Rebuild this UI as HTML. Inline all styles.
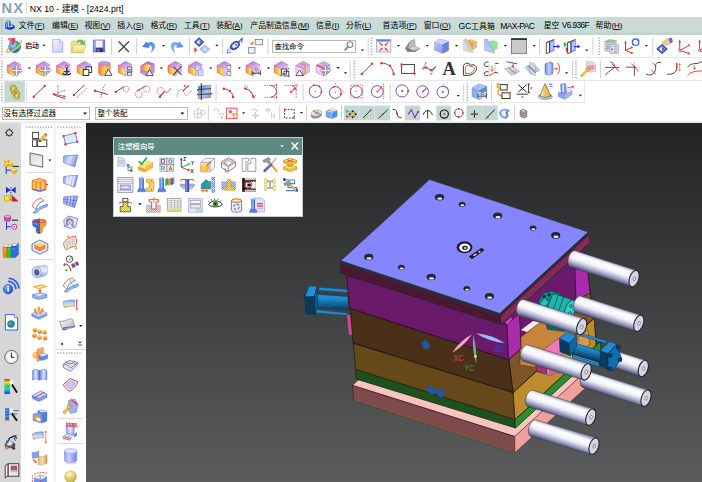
<!DOCTYPE html><html><head><meta charset="utf-8"><title>NX 10</title><style>
html,body{margin:0;padding:0;}
body{width:702px;height:482px;overflow:hidden;background:#fff;position:relative;font-family:"Liberation Sans","Noto Sans CJK SC",sans-serif;font-size:8px;color:#111;}
.abs{position:absolute;}
.t{position:absolute;white-space:nowrap;line-height:10px;height:10px;}
#title{left:0;top:0;width:702px;height:17px;background:#fff;}
#menu{left:0;top:17px;width:702px;height:18px;background:linear-gradient(#cbdbd8 0%,#c9d9d6 75%,#bfd0cc 100%);}
#tb{left:0;top:35px;width:702px;height:88px;background:#fff;}
.hs{position:absolute;left:0;width:702px;height:1px;background:#e6e6e6;}
#res{left:0;top:123px;width:21px;height:359px;background:#d6d6d6;}
#side{left:21px;top:123px;width:65px;height:359px;background:#fff;}
#view{left:86px;top:123px;width:616px;height:359px;background:linear-gradient(#222324 0%,#3f4042 50%,#5a5c5e 100%);}
.combo{position:absolute;height:12px;border:1px solid #b9b9b9;background:#fff;box-sizing:border-box;}
#dlg{left:113px;top:137px;width:190px;height:80px;background:#fff;border:1px solid #c8c8c8;box-sizing:border-box;}
#dlgt{left:0;top:0;width:188px;height:17px;background:#5c8b83;}
svg{position:absolute;left:0;top:0;}
</style></head><body>
<div id="title" class="abs"></div>
<div id="menu" class="abs"></div>
<div id="tb" class="abs"></div>
<div class="hs" style="top:57px;width:702px"></div>
<div class="hs" style="top:80px;width:702px"></div>
<div class="hs" style="top:102px;width:585px"></div>
<div class="abs" style="left:584px;top:80px;width:1px;height:22px;background:#e6e6e6"></div>
<div class="hs" style="top:121px;height:2px;background:#ececec"></div>
<div id="res" class="abs"></div><div id="side" class="abs"></div><div id="view" class="abs"></div>
<div class="t" style="left:1.6px;top:0.2px;font-size:14.6px;line-height:16px;height:16px;color:#8e9eac;letter-spacing:1.2px;font-weight:bold;">NX</div>
<div class="abs" style="left:26px;top:1px;width:1px;height:13px;background:#ddd"></div>
<div class="t" style="left:29.8px;top:3.8px;font-size:8.7px;color:#000;">NX 10 - 建模 - [2424.prt]</div>
<div class="t" style="left:18.8px;top:20.5px;font-size:7.9px;color:#000;">文件(<u>F</u>)</div>
<div class="t" style="left:52.0px;top:20.5px;font-size:7.9px;color:#000;">编辑(<u>E</u>)</div>
<div class="t" style="left:84.4px;top:20.5px;font-size:7.9px;color:#000;">视图(<u>V</u>)</div>
<div class="t" style="left:117.3px;top:20.5px;font-size:7.9px;color:#000;">插入(<u>S</u>)</div>
<div class="t" style="left:150.4px;top:20.5px;font-size:7.9px;color:#000;">格式(<u>R</u>)</div>
<div class="t" style="left:183.9px;top:20.5px;font-size:7.9px;color:#000;">工具(<u>T</u>)</div>
<div class="t" style="left:216.2px;top:20.5px;font-size:7.9px;color:#000;">装配(<u>A</u>)</div>
<div class="t" style="left:250.3px;top:20.5px;font-size:7.9px;color:#000;">产品制造信息(<u>M</u>)</div>
<div class="t" style="left:316.0px;top:20.5px;font-size:7.9px;color:#000;">信息(<u>I</u>)</div>
<div class="t" style="left:346.0px;top:20.5px;font-size:7.9px;color:#000;">分析(<u>L</u>)</div>
<div class="t" style="left:382.6px;top:20.5px;font-size:7.9px;color:#000;">首选项(<u>P</u>)</div>
<div class="t" style="left:423.7px;top:20.5px;font-size:7.9px;color:#000;">窗口(<u>O</u>)</div>
<div class="t" style="left:458.6px;top:20.5px;font-size:7.9px;color:#000;"><span style="font-size:8.6px;letter-spacing:-0.2px">GC</span>工具箱</div>
<div class="t" style="left:500.2px;top:20.5px;font-size:7.9px;color:#000;"><span style="font-size:8.5px;letter-spacing:-0.55px">MAX-PAC</span></div>
<div class="t" style="left:543.7px;top:20.5px;font-size:7.9px;color:#000;">星空 <span style="font-size:8.2px;letter-spacing:-0.5px">V6.936F</span></div>
<div class="t" style="left:595.6px;top:20.5px;font-size:7.9px;color:#000;">帮助(<u>H</u>)</div>
<div class="t" style="left:25.2px;top:40.5px;font-size:6.9px;font-weight:500;color:#000;">启动</div>
<div class="combo" style="left:272px;top:40px;width:84px;height:13px;"></div>
<div class="t" style="left:274.5px;top:41.5px;font-size:7.3px;color:#000;">查找命令</div>
<div class="combo" style="left:2px;top:107px;width:88px;height:13px;"></div>
<div class="t" style="left:3.6px;top:108.5px;font-size:7.5px;color:#000;">没有选择过滤器</div>
<div class="combo" style="left:95px;top:107px;width:93px;height:13px;"></div>
<div class="t" style="left:97.5px;top:108.5px;font-size:7.5px;color:#000;">整个装配</div>
<div id="dlg" class="abs"><div id="dlgt" class="abs"></div><div class="t" style="left:3.8px;top:3.8px;font-size:7.4px;font-weight:500;color:#fff;">注塑模向导</div></div>
<svg width="702" height="482" viewBox="0 0 702 482">
<g id="model">
<linearGradient id="lact" x1="0" y1="0" x2="0" y2="1"><stop offset="0" stop-color="#2297e0"/><stop offset="0.35" stop-color="#1a84c8"/><stop offset="1" stop-color="#093a5a"/></linearGradient>
<polygon points="319.0,287.2 348.0,289.6 348.0,292.6 319.0,290.4" fill="#1c8cd4" stroke="#0b3c5e" stroke-width="0.4" stroke-linejoin="round"/>
<polygon points="315.5,294.3 348.0,296.7 348.0,309.8 315.5,307.9" fill="url(#lact)" stroke="#0b3c5e" stroke-width="0.4" stroke-linejoin="round"/>
<polygon points="315.7,309.6 348.0,313.2 348.0,315.4 315.7,313.0" fill="#1c8cd4" stroke="#0b3c5e" stroke-width="0.4" stroke-linejoin="round"/>
<polygon points="309.2,285.9 317.1,286.4 314.3,296.7 305.0,297.1" fill="#1f92dc" stroke="#0b3c5e" stroke-width="0.5" stroke-linejoin="round"/>
<polygon points="305.0,297.1 314.3,296.7 315.3,314.4 306.4,313.9" fill="#0a3a5c" stroke="#072a42" stroke-width="0.5" stroke-linejoin="round"/>
<polygon points="314.3,296.7 317.1,286.4 318.0,302.0 315.3,314.4" fill="#0f5a8c" stroke="#072a42" stroke-width="0.4" stroke-linejoin="round"/>
<polygon points="303.3,294.0 305.0,294.0 305.0,298.5 303.3,298.5" fill="#0b3c5e"/>
<polygon points="304.5,308.0 306.0,308.0 306.0,312.0 304.5,312.0" fill="#0b3c5e"/>
<polygon points="307.0,286.5 308.8,286.0 308.4,289.0 306.8,289.4" fill="#0f5a8c"/>
<polygon points="352.5,385.4 514.8,436.5 588.5,368.9 426.2,317.8" fill="#f9c4c0" stroke="#5a3a3a" stroke-width="0.5" stroke-linejoin="round"/>
<polygon points="352.5,385.4 514.8,436.5 514.9,452.7 353.5,399.8" fill="#7e4a4c" stroke="#3a2628" stroke-width="0.85" stroke-linejoin="round"/>
<polygon points="514.8,436.5 588.5,368.9 588.6,385.1 514.9,452.7" fill="#f0a09a" stroke="#5a3a3a" stroke-width="0.6" stroke-linejoin="round"/>
<path d="M353.5 399.5 L514.9 452.4" stroke="#8a7a30" stroke-width="0.7"/>
<polygon points="355.5,369.3 515.0,419.8 515.5,428.0 356.0,379.0" fill="#1d5220" stroke="#10300f" stroke-width="0.8" stroke-linejoin="round"/>
<polygon points="515.0,419.8 600.5,341.4 601.0,349.6 515.5,428.0" fill="#2a8f30" stroke="#10300f" stroke-width="0.8" stroke-linejoin="round"/>
<polygon points="353.4,343.3 513.2,392.5 514.9,419.6 355.4,369.3" fill="#66491b" stroke="#2a1e0c" stroke-width="0.85" stroke-linejoin="round"/>
<polygon points="513.2,392.5 594.3,318.1 596.0,345.2 514.9,419.6" fill="#bd8c2e" stroke="#2a1e0c" stroke-width="0.85" stroke-linejoin="round"/>
<polygon points="350.0,308.3 509.0,359.8 513.2,392.5 353.2,343.0" fill="#4b3019" stroke="#20140a" stroke-width="0.85" stroke-linejoin="round"/>
<polygon points="509.0,359.8 589.3,286.1 593.5,318.8 513.2,392.5" fill="#7c5529" stroke="#20140a" stroke-width="0.85" stroke-linejoin="round"/>
<polygon points="346.6,314.3 350.4,314.8 352.3,335.2 348.6,335.2" fill="#c0509a" stroke="#50203c" stroke-width="0.4" stroke-linejoin="round"/>
<polygon points="502.0,325.0 575.7,257.4 582.3,292.2 508.6,359.8" fill="#6d1a6e"/>
<polygon points="520.0,338.0 545.0,318.0 575.0,326.0 575.0,340.0 540.0,368.0 520.0,365.0" fill="#c8853a" stroke="#4a2e10" stroke-width="0.5" stroke-linejoin="round"/>
<polygon points="540.0,368.0 575.0,340.0 588.0,330.0 590.0,344.0 556.0,372.0" fill="#d69a48" stroke="#4a2e10" stroke-width="0.5" stroke-linejoin="round"/>
<polygon points="540.0,352.0 562.0,336.0 580.0,340.0 560.0,356.0 560.0,372.0 548.0,376.0" fill="#f07ab8" stroke="#7a2a5a" stroke-width="0.5" stroke-linejoin="round"/>
<polygon points="549.0,356.0 560.0,356.0 560.0,372.0 549.0,375.0" fill="#d0609a"/>
<polygon points="535.5,364.5 546.5,367.2 546.5,374.2 537.0,372.0" fill="#a03468" stroke="#401028" stroke-width="0.5" stroke-linejoin="round"/>
<circle cx="544.5" cy="373.6" r="1" fill="#2a6ae0"/>
<g transform="translate(2.5 5.5)">
<polygon points="536.0,296.0 541.0,287.5 549.0,285.5 557.0,288.0 560.0,293.0 552.0,301.0 540.0,303.0" fill="#0d8a84" stroke="#063c3a" stroke-width="0.6" stroke-linejoin="round"/>
<circle cx="541.5" cy="291.0" r="1.5" fill="#052a28"/>
<circle cx="546.5" cy="289.2" r="1.5" fill="#052a28"/>
<circle cx="551.5" cy="290.2" r="1.5" fill="#052a28"/>
<circle cx="544.0" cy="295.0" r="1.5" fill="#052a28"/>
<circle cx="549.0" cy="294.0" r="1.5" fill="#052a28"/>
<polygon points="538.0,298.0 543.0,293.0 546.0,297.0 541.0,301.0" fill="#27c4ba"/>
<g transform="rotate(19 560 302)"><rect x="546" y="291.5" width="22" height="21" rx="3" fill="#1cb4ac" stroke="#063c3a" stroke-width="0.6"/><path d="M552 291.5 V312.5 M557.5 291.5 V312.5" stroke="#0a5a56" stroke-width="0.8"/><ellipse cx="568" cy="302" rx="5" ry="10.5" fill="#2fd0c6" stroke="#063c3a" stroke-width="0.7"/><circle cx="567.5" cy="298" r="1.4" fill="none" stroke="#063c3a" stroke-width="0.7"/><circle cx="569" cy="305" r="1.4" fill="none" stroke="#063c3a" stroke-width="0.7"/></g>
<polygon points="541.0,310.0 562.0,318.0 562.0,326.0 545.0,324.0" fill="#0c6662" stroke="#063c3a" stroke-width="0.5" stroke-linejoin="round"/>
</g>
<polygon points="521.0,330.0 533.0,321.0 540.0,322.0 527.0,332.0" fill="#f2f2f2"/>
<polygon points="346.7,275.3 507.0,324.5 508.6,359.8 509.0,359.8 350.0,308.3 349.5,308.0" fill="#691a6b" stroke="#2a0c2a" stroke-width="0.85" stroke-linejoin="round"/>
<polygon points="507.0,324.5 519.5,313.0 521.1,348.3 508.6,359.8" fill="#ab2bad" stroke="#3a0f3a" stroke-width="0.85" stroke-linejoin="round"/>
<polygon points="574.6,262.5 585.6,252.2 590.2,293.0 576.0,300.0" fill="#aa2bac" stroke="#3a0f3a" stroke-width="0.85" stroke-linejoin="round"/>
<polygon points="340.8,260.8 499.8,313.5 501.0,324.5 340.2,272.8" fill="#4a1833" stroke="#26262c" stroke-width="0.8" stroke-linejoin="round"/>
<polygon points="499.8,313.5 588.4,232.0 590.6,242.2 501.0,324.5" fill="#86285a" stroke="#26262c" stroke-width="0.8" stroke-linejoin="round"/>
<polygon points="340.8,260.8 429.5,179.5 588.4,232.0 499.8,313.5" fill="#8585ff" stroke="#34343e" stroke-width="0.7" stroke-linejoin="round"/>
<path d="M340.6 262.5 L499.8 315.2 L588.8 233.5" stroke="#2c2c38" stroke-width="2.8" fill="none" stroke-linejoin="round"/>
<polygon points="505.5,322.5 511.0,317.5 512.0,319.5 507.0,324.5" fill="#e040e0"/>
<ellipse cx="439.5" cy="197.2" rx="4.6" ry="3.3" fill="#26262e"/><ellipse cx="439.8" cy="198.6" rx="2.6" ry="1.2" fill="#ececec"/>
<ellipse cx="497.7" cy="215.8" rx="4.6" ry="3.3" fill="#26262e"/><ellipse cx="498.0" cy="217.2" rx="2.6" ry="1.2" fill="#ececec"/>
<ellipse cx="555.7" cy="235.4" rx="4.6" ry="3.3" fill="#26262e"/><ellipse cx="556.0" cy="236.8" rx="2.6" ry="1.2" fill="#ececec"/>
<ellipse cx="368.8" cy="257.0" rx="4.6" ry="3.3" fill="#26262e"/><ellipse cx="369.1" cy="258.4" rx="2.6" ry="1.2" fill="#ececec"/>
<ellipse cx="431.2" cy="277.0" rx="4.6" ry="3.3" fill="#26262e"/><ellipse cx="431.5" cy="278.4" rx="2.6" ry="1.2" fill="#ececec"/>
<ellipse cx="489.4" cy="296.2" rx="4.6" ry="3.3" fill="#26262e"/><ellipse cx="489.7" cy="297.6" rx="2.6" ry="1.2" fill="#ececec"/>
<ellipse cx="462.1" cy="204.2" rx="3.4" ry="2.5" fill="#26262e"/><ellipse cx="462.4" cy="205.2" rx="1.9" ry="0.9" fill="#ececec"/>
<ellipse cx="533.1" cy="228.1" rx="3.4" ry="2.5" fill="#26262e"/><ellipse cx="533.4" cy="229.2" rx="1.9" ry="0.9" fill="#ececec"/>
<ellipse cx="401.3" cy="267.3" rx="3.4" ry="2.5" fill="#26262e"/><ellipse cx="401.6" cy="268.4" rx="1.9" ry="0.9" fill="#ececec"/>
<ellipse cx="466.8" cy="288.6" rx="3.4" ry="2.5" fill="#26262e"/><ellipse cx="467.1" cy="289.7" rx="1.9" ry="0.9" fill="#ececec"/>
<ellipse cx="464.5" cy="247.3" rx="7.8" ry="6" fill="#1c1c22"/><ellipse cx="464.7" cy="247.6" rx="5.6" ry="4.2" fill="#f2f2f2"/><ellipse cx="465" cy="247.8" rx="2.8" ry="2.1" fill="#222"/><ellipse cx="465.2" cy="248" rx="1.2" ry="0.9" fill="#ddd"/>
<polygon points="468.8,256.6 481.6,247.8 484.4,250.3 471.8,259.2" fill="#1c1c22"/>
<polygon points="473.0,255.2 476.0,253.2 477.0,254.2 474.0,256.2" fill="#e8e8e8"/>
<polygon points="478.0,252.0 480.0,250.6 480.8,251.5 478.8,252.9" fill="#e8e8e8"/>
<linearGradient id="cg5" gradientUnits="userSpaceOnUse" x1="616.7" y1="351.1" x2="611.3" y2="367.3"><stop offset="0" stop-color="#a8a8c2"/><stop offset="0.08" stop-color="#e2e2f0"/><stop offset="0.2" stop-color="#ffffff"/><stop offset="0.48" stop-color="#f2f2fb"/><stop offset="0.68" stop-color="#babad6"/><stop offset="0.86" stop-color="#7c7ca4"/><stop offset="1" stop-color="#3e3e56"/></linearGradient><ellipse cx="614.0" cy="359.2" rx="4.6" ry="8.5" transform="rotate(18.4 614.0 359.2)" fill="url(#cg5)" stroke="#3a3a44" stroke-width="0.5"/><polygon points="616.7,351.1 646.0,360.4 640.6,376.6 611.3,367.3" fill="url(#cg5)"/><path d="M616.7 351.1 L646.0 360.4 M611.3 367.3 L640.6 376.6" stroke="#3a3a44" stroke-width="0.5" fill="none"/><ellipse cx="643.3" cy="368.5" rx="4.6" ry="8.5" transform="rotate(18.4 643.3 368.5)" fill="#d4d4e4" stroke="#24242c" stroke-width="1.1"/><ellipse cx="643.6" cy="368.5" rx="1.2" ry="2" transform="rotate(18.4 643.3 368.5)" fill="#f4f4fa" stroke="#555" stroke-width="0.6"/>
<linearGradient id="ract" gradientUnits="userSpaceOnUse" x1="586" y1="346" x2="583" y2="358"><stop offset="0" stop-color="#2297e0"/><stop offset="0.4" stop-color="#1679b8"/><stop offset="1" stop-color="#083450"/></linearGradient>
<polygon points="581.7,333.4 606.8,340.8 606.8,343.6 581.7,336.2" fill="#1f8dd6" stroke="#0a3350" stroke-width="0.4" stroke-linejoin="round"/>
<polygon points="572.0,342.0 602.0,351.5 600.0,364.5 572.0,356.0" fill="#0b3350"/>
<polygon points="572.0,342.1 602.2,351.8 600.0,361.5 572.5,353.5" fill="url(#ract)" stroke="#0a3350" stroke-width="0.4" stroke-linejoin="round"/>
<polygon points="573.0,354.8 599.0,362.8 599.0,364.0 573.0,356.0" fill="#8a93a6"/>
<polygon points="572.5,355.6 598.8,364.0 598.8,366.6 572.5,358.2" fill="#1f8dd6" stroke="#0a3350" stroke-width="0.4" stroke-linejoin="round"/>
<polygon points="559.4,338.7 566.8,331.8 576.5,335.8 569.1,343.3" fill="#1f8dd6" stroke="#0a3350" stroke-width="0.5" stroke-linejoin="round"/>
<polygon points="559.4,338.7 569.1,343.3 570.3,355.8 560.0,351.8" fill="#0a3c60" stroke="#072a42" stroke-width="0.5" stroke-linejoin="round"/>
<polygon points="569.1,343.3 576.5,335.8 577.0,346.0 570.3,355.8" fill="#1266a0" stroke="#072a42" stroke-width="0.5" stroke-linejoin="round"/>
<polygon points="600.0,350.7 609.6,341.6 617.0,343.8 608.0,353.5" fill="#1f8dd6" stroke="#0a3350" stroke-width="0.5" stroke-linejoin="round"/>
<polygon points="600.0,351.0 608.0,354.1 608.0,369.5 600.5,366.1" fill="#0a3c60" stroke="#072a42" stroke-width="0.5" stroke-linejoin="round"/>
<polygon points="608.0,354.1 616.5,344.4 621.6,358.1 613.1,370.7 608.0,369.5" fill="#116eae" stroke="#072a42" stroke-width="0.6" stroke-linejoin="round"/>
<circle cx="618.2" cy="347.3" r="2.3" fill="#0a2e48"/><circle cx="618.2" cy="347.3" r="1.1" fill="#0d4a74"/>
<circle cx="610.4" cy="355.6" r="2.3" fill="#0a2e48"/><circle cx="610.4" cy="355.6" r="1.1" fill="#0d4a74"/>
<circle cx="620.0" cy="359.8" r="2.3" fill="#0a2e48"/><circle cx="620.0" cy="359.8" r="1.1" fill="#0d4a74"/>
<circle cx="610.4" cy="368.6" r="2.3" fill="#0a2e48"/><circle cx="610.4" cy="368.6" r="1.1" fill="#0d4a74"/>
<linearGradient id="cg1" gradientUnits="userSpaceOnUse" x1="575.6" y1="250.8" x2="570.2" y2="267.0"><stop offset="0" stop-color="#a8a8c2"/><stop offset="0.08" stop-color="#e2e2f0"/><stop offset="0.2" stop-color="#ffffff"/><stop offset="0.48" stop-color="#f2f2fb"/><stop offset="0.68" stop-color="#babad6"/><stop offset="0.86" stop-color="#7c7ca4"/><stop offset="1" stop-color="#3e3e56"/></linearGradient><ellipse cx="572.9" cy="258.9" rx="4.6" ry="8.5" transform="rotate(18.4 572.9 258.9)" fill="url(#cg1)" stroke="#3a3a44" stroke-width="0.5"/><polygon points="575.6,250.8 636.8,270.5 631.4,286.7 570.2,267.0" fill="url(#cg1)"/><path d="M575.6 250.8 L636.8 270.5 M570.2 267.0 L631.4 286.7" stroke="#3a3a44" stroke-width="0.5" fill="none"/><ellipse cx="634.1" cy="278.6" rx="4.6" ry="8.5" transform="rotate(18.4 634.1 278.6)" fill="#d4d4e4" stroke="#24242c" stroke-width="1.1"/><ellipse cx="634.4" cy="278.6" rx="1.2" ry="2" transform="rotate(18.4 634.1 278.6)" fill="#f4f4fa" stroke="#555" stroke-width="0.6"/>
<linearGradient id="cg2" gradientUnits="userSpaceOnUse" x1="581.1" y1="296.1" x2="575.7" y2="312.3"><stop offset="0" stop-color="#a8a8c2"/><stop offset="0.08" stop-color="#e2e2f0"/><stop offset="0.2" stop-color="#ffffff"/><stop offset="0.48" stop-color="#f2f2fb"/><stop offset="0.68" stop-color="#babad6"/><stop offset="0.86" stop-color="#7c7ca4"/><stop offset="1" stop-color="#3e3e56"/></linearGradient><ellipse cx="578.4" cy="304.2" rx="4.6" ry="8.5" transform="rotate(18.4 578.4 304.2)" fill="url(#cg2)" stroke="#3a3a44" stroke-width="0.5"/><polygon points="581.1,296.1 641.5,315.2 636.1,331.4 575.7,312.3" fill="url(#cg2)"/><path d="M581.1 296.1 L641.5 315.2 M575.7 312.3 L636.1 331.4" stroke="#3a3a44" stroke-width="0.5" fill="none"/><ellipse cx="638.8" cy="323.3" rx="4.6" ry="8.5" transform="rotate(18.4 638.8 323.3)" fill="#d4d4e4" stroke="#24242c" stroke-width="1.1"/><ellipse cx="639.1" cy="323.3" rx="1.2" ry="2" transform="rotate(18.4 638.8 323.3)" fill="#f4f4fa" stroke="#555" stroke-width="0.6"/>
<linearGradient id="cg3" gradientUnits="userSpaceOnUse" x1="524.0" y1="299.5" x2="518.6" y2="315.7"><stop offset="0" stop-color="#a8a8c2"/><stop offset="0.08" stop-color="#e2e2f0"/><stop offset="0.2" stop-color="#ffffff"/><stop offset="0.48" stop-color="#f2f2fb"/><stop offset="0.68" stop-color="#babad6"/><stop offset="0.86" stop-color="#7c7ca4"/><stop offset="1" stop-color="#3e3e56"/></linearGradient><ellipse cx="521.3" cy="307.6" rx="4.6" ry="8.5" transform="rotate(18.4 521.3 307.6)" fill="url(#cg3)" stroke="#3a3a44" stroke-width="0.5"/><polygon points="524.0,299.5 584.4,318.6 579.0,334.8 518.6,315.7" fill="url(#cg3)"/><path d="M524.0 299.5 L584.4 318.6 M518.6 315.7 L579.0 334.8" stroke="#3a3a44" stroke-width="0.5" fill="none"/><ellipse cx="581.7" cy="326.7" rx="4.6" ry="8.5" transform="rotate(18.4 581.7 326.7)" fill="#d4d4e4" stroke="#24242c" stroke-width="1.1"/><ellipse cx="582.0" cy="326.7" rx="1.2" ry="2" transform="rotate(18.4 581.7 326.7)" fill="#f4f4fa" stroke="#555" stroke-width="0.6"/>
<linearGradient id="cg6" gradientUnits="userSpaceOnUse" x1="587.9" y1="371.0" x2="582.5" y2="387.2"><stop offset="0" stop-color="#a8a8c2"/><stop offset="0.08" stop-color="#e2e2f0"/><stop offset="0.2" stop-color="#ffffff"/><stop offset="0.48" stop-color="#f2f2fb"/><stop offset="0.68" stop-color="#babad6"/><stop offset="0.86" stop-color="#7c7ca4"/><stop offset="1" stop-color="#3e3e56"/></linearGradient><ellipse cx="585.2" cy="379.1" rx="4.6" ry="8.5" transform="rotate(18.4 585.2 379.1)" fill="url(#cg6)" stroke="#3a3a44" stroke-width="0.5"/><polygon points="587.9,371.0 648.7,390.1 643.3,406.3 582.5,387.2" fill="url(#cg6)"/><path d="M587.9 371.0 L648.7 390.1 M582.5 387.2 L643.3 406.3" stroke="#3a3a44" stroke-width="0.5" fill="none"/><ellipse cx="646.0" cy="398.2" rx="4.6" ry="8.5" transform="rotate(18.4 646.0 398.2)" fill="#d4d4e4" stroke="#24242c" stroke-width="1.1"/><ellipse cx="646.3" cy="398.2" rx="1.2" ry="2" transform="rotate(18.4 646.0 398.2)" fill="#f4f4fa" stroke="#555" stroke-width="0.6"/>
<linearGradient id="cg4" gradientUnits="userSpaceOnUse" x1="528.2" y1="344.9" x2="522.8" y2="361.1"><stop offset="0" stop-color="#a8a8c2"/><stop offset="0.08" stop-color="#e2e2f0"/><stop offset="0.2" stop-color="#ffffff"/><stop offset="0.48" stop-color="#f2f2fb"/><stop offset="0.68" stop-color="#babad6"/><stop offset="0.86" stop-color="#7c7ca4"/><stop offset="1" stop-color="#3e3e56"/></linearGradient><ellipse cx="525.5" cy="353.0" rx="4.6" ry="8.5" transform="rotate(18.4 525.5 353.0)" fill="url(#cg4)" stroke="#3a3a44" stroke-width="0.5"/><polygon points="528.2,344.9 588.9,363.8 583.5,380.0 522.8,361.1" fill="url(#cg4)"/><path d="M528.2 344.9 L588.9 363.8 M522.8 361.1 L583.5 380.0" stroke="#3a3a44" stroke-width="0.5" fill="none"/><ellipse cx="586.2" cy="371.9" rx="4.6" ry="8.5" transform="rotate(18.4 586.2 371.9)" fill="#d4d4e4" stroke="#24242c" stroke-width="1.1"/><ellipse cx="586.5" cy="371.9" rx="1.2" ry="2" transform="rotate(18.4 586.2 371.9)" fill="#f4f4fa" stroke="#555" stroke-width="0.6"/>
<linearGradient id="cg7" gradientUnits="userSpaceOnUse" x1="533.1" y1="390.3" x2="527.7" y2="406.5"><stop offset="0" stop-color="#a8a8c2"/><stop offset="0.08" stop-color="#e2e2f0"/><stop offset="0.2" stop-color="#ffffff"/><stop offset="0.48" stop-color="#f2f2fb"/><stop offset="0.68" stop-color="#babad6"/><stop offset="0.86" stop-color="#7c7ca4"/><stop offset="1" stop-color="#3e3e56"/></linearGradient><ellipse cx="530.4" cy="398.4" rx="4.6" ry="8.5" transform="rotate(18.4 530.4 398.4)" fill="url(#cg7)" stroke="#3a3a44" stroke-width="0.5"/><polygon points="533.1,390.3 593.5,409.1 588.1,425.3 527.7,406.5" fill="url(#cg7)"/><path d="M533.1 390.3 L593.5 409.1 M527.7 406.5 L588.1 425.3" stroke="#3a3a44" stroke-width="0.5" fill="none"/><ellipse cx="590.8" cy="417.2" rx="4.6" ry="8.5" transform="rotate(18.4 590.8 417.2)" fill="#d4d4e4" stroke="#24242c" stroke-width="1.1"/><ellipse cx="591.1" cy="417.2" rx="1.2" ry="2" transform="rotate(18.4 590.8 417.2)" fill="#f4f4fa" stroke="#555" stroke-width="0.6"/>
<linearGradient id="cg8" gradientUnits="userSpaceOnUse" x1="536.1" y1="420.0" x2="530.7" y2="436.2"><stop offset="0" stop-color="#a8a8c2"/><stop offset="0.08" stop-color="#e2e2f0"/><stop offset="0.2" stop-color="#ffffff"/><stop offset="0.48" stop-color="#f2f2fb"/><stop offset="0.68" stop-color="#babad6"/><stop offset="0.86" stop-color="#7c7ca4"/><stop offset="1" stop-color="#3e3e56"/></linearGradient><ellipse cx="533.4" cy="428.1" rx="4.6" ry="8.5" transform="rotate(18.4 533.4 428.1)" fill="url(#cg8)" stroke="#3a3a44" stroke-width="0.5"/><polygon points="536.1,420.0 596.7,438.0 591.3,454.2 530.7,436.2" fill="url(#cg8)"/><path d="M536.1 420.0 L596.7 438.0 M530.7 436.2 L591.3 454.2" stroke="#3a3a44" stroke-width="0.5" fill="none"/><ellipse cx="594.0" cy="446.1" rx="4.6" ry="8.5" transform="rotate(18.4 594.0 446.1)" fill="#d4d4e4" stroke="#24242c" stroke-width="1.1"/><ellipse cx="594.3" cy="446.1" rx="1.2" ry="2" transform="rotate(18.4 594.0 446.1)" fill="#f4f4fa" stroke="#555" stroke-width="0.6"/>
<path d="M471.9 334.2 Q459.6 341.0 452.2 352.8 Q464.4 345.6 471.9 334.2 Z" fill="#f2aaaa"/>
<path d="M473.2 334.8 Q471.9 352 476.2 363.2 Q477.4 351 473.2 334.8 Z" fill="#84a884"/><circle cx="475.4" cy="356.2" r="1.2" fill="#c8f0c0"/>
<path d="M476.0 333.3 Q492.6 335.0 504.9 343.2 Q488.6 341.6 476.0 333.3 Z" fill="#96bcf2"/>
<text x="453.4" y="360.5" font-family="Liberation Sans,sans-serif" font-size="8.3" textLength="9.9" lengthAdjust="spacingAndGlyphs" fill="#e23a3a">XC</text>
<text x="464.6" y="370.6" font-family="Liberation Sans,sans-serif" font-size="8.3" textLength="9.9" lengthAdjust="spacingAndGlyphs" fill="#2f9e3c">YC</text>
<text x="494.9" y="351.8" font-family="Liberation Sans,sans-serif" font-size="8.3" textLength="9.6" lengthAdjust="spacingAndGlyphs" fill="#2c3ce8">ZC</text>
<ellipse cx="425.6" cy="344.8" rx="3.6" ry="4.4" transform="rotate(-25 425.6 344.8)" fill="#1a58a8"/>
<ellipse cx="431.7" cy="390" rx="3.8" ry="4.6" transform="rotate(-25 431.7 390)" fill="#1a58a8"/>
<ellipse cx="440.7" cy="393" rx="3.8" ry="4.6" transform="rotate(-25 440.7 393)" fill="#1a58a8"/>
</g>
<defs><linearGradient id="nxi" x1="0" y1="0" x2="1" y2="1"><stop offset="0" stop-color="#7f9cfa"/><stop offset="0.45" stop-color="#1c3ce0"/><stop offset="1" stop-color="#0c1ea8"/></linearGradient><radialGradient id="glb" cx="0.4" cy="0.35" r="0.7"><stop offset="0" stop-color="#bfeaff"/><stop offset="0.45" stop-color="#4aa0f0"/><stop offset="1" stop-color="#1a4ad0"/></radialGradient><linearGradient id="doc" x1="0" y1="0" x2="1" y2="1"><stop offset="0" stop-color="#f4f5fe"/><stop offset="1" stop-color="#c6cbf4"/></linearGradient><linearGradient id="fold" x1="0" y1="0" x2="0" y2="1"><stop offset="0" stop-color="#fcf7cc"/><stop offset="1" stop-color="#ecd873"/></linearGradient><linearGradient id="sav" x1="0" y1="0" x2="1" y2="1"><stop offset="0" stop-color="#a2aef4"/><stop offset="1" stop-color="#5c6ad0"/></linearGradient><linearGradient id="und" x1="0" y1="0" x2="1" y2="0"><stop offset="0" stop-color="#2f6fe0"/><stop offset="1" stop-color="#6fa4f2"/></linearGradient><linearGradient id="red" x1="0" y1="0" x2="1" y2="0"><stop offset="0" stop-color="#4a88ea"/><stop offset="1" stop-color="#8ab8f6"/></linearGradient><linearGradient id="bc1" x1="0" y1="0" x2="1" y2="1"><stop offset="0" stop-color="#c0c9f6"/><stop offset="1" stop-color="#8896e6"/></linearGradient><linearGradient id="cbL" x1="0" y1="0.5" x2="1" y2="0.5"><stop offset="0" stop-color="#f28a48"/><stop offset="0.5" stop-color="#f9cf50"/><stop offset="1" stop-color="#fce684"/></linearGradient><linearGradient id="cbR" x1="0" y1="0" x2="1" y2="1"><stop offset="0" stop-color="#f4eafa"/><stop offset="1" stop-color="#c6a2e2"/></linearGradient><linearGradient id="cbT" x1="0" y1="0" x2="0.6" y2="1"><stop offset="0" stop-color="#a962d8"/><stop offset="1" stop-color="#e2c4f2"/></linearGradient><linearGradient id="cyL" x1="0" y1="0" x2="1" y2="0"><stop offset="0" stop-color="#f07a38"/><stop offset="0.5" stop-color="#f8d050"/><stop offset="1" stop-color="#f4a040"/></linearGradient><linearGradient id="sh5" x1="0" y1="0" x2="1" y2="0"><stop offset="0" stop-color="#5f7fe0"/><stop offset="0.5" stop-color="#c8d6fa"/><stop offset="1" stop-color="#6f8ce4"/></linearGradient><linearGradient id="bfg" x1="0" y1="0" x2="1" y2="1"><stop offset="0" stop-color="#4f80d4"/><stop offset="0.6" stop-color="#a9c6ee"/><stop offset="1" stop-color="#6f9ade"/></linearGradient><linearGradient id="cone" x1="0" y1="0" x2="1" y2="0"><stop offset="0" stop-color="#f8e4a0"/><stop offset="0.55" stop-color="#f4cc68"/><stop offset="1" stop-color="#eca84a"/></linearGradient><radialGradient id="inf" cx="0.35" cy="0.3" r="0.8"><stop offset="0" stop-color="#6fb0fa"/><stop offset="1" stop-color="#1244d0"/></radialGradient><linearGradient id="rnb" x1="0" y1="0" x2="0" y2="1"><stop offset="0" stop-color="#f01818"/><stop offset="0.22" stop-color="#f0e020"/><stop offset="0.45" stop-color="#28d830"/><stop offset="0.68" stop-color="#20d0e0"/><stop offset="1" stop-color="#1830f0"/></linearGradient><linearGradient id="pln" x1="0" y1="0" x2="1" y2="1"><stop offset="0" stop-color="#cfe4d0"/><stop offset="1" stop-color="#f2f6f2"/></linearGradient><linearGradient id="ext" x1="0" y1="0" x2="1" y2="0"><stop offset="0" stop-color="#f08a30"/><stop offset="0.15" stop-color="#fbd868"/><stop offset="0.3" stop-color="#f08a30"/><stop offset="0.45" stop-color="#fbd868"/><stop offset="0.6" stop-color="#f08a30"/><stop offset="0.78" stop-color="#fbd868"/><stop offset="1" stop-color="#f08030"/></linearGradient><linearGradient id="tub" x1="0" y1="0" x2="0" y2="1"><stop offset="0" stop-color="#b8c4f4"/><stop offset="0.4" stop-color="#eef2fe"/><stop offset="1" stop-color="#7f90e0"/></linearGradient><linearGradient id="pnl" x1="0" y1="0" x2="1" y2="0"><stop offset="0" stop-color="#6f94ec"/><stop offset="0.5" stop-color="#dfe8fc"/><stop offset="1" stop-color="#6f94ec"/></linearGradient><linearGradient id="sh15" x1="0" y1="0" x2="0" y2="1"><stop offset="0" stop-color="#7fa4ec"/><stop offset="0.55" stop-color="#c9dafa"/><stop offset="0.75" stop-color="#fbe070"/><stop offset="1" stop-color="#f0b030"/></linearGradient><linearGradient id="sh16" x1="0" y1="0" x2="1" y2="0"><stop offset="0" stop-color="#f5b060"/><stop offset="0.5" stop-color="#d6ecc0"/><stop offset="1" stop-color="#f08a40"/></linearGradient><linearGradient id="rul" x1="0" y1="0" x2="1" y2="0.3"><stop offset="0" stop-color="#8a9cf0"/><stop offset="0.5" stop-color="#d6defb"/><stop offset="1" stop-color="#7f92ec"/></linearGradient><linearGradient id="sh9" x1="0" y1="0" x2="0" y2="1"><stop offset="0" stop-color="#7fa4ec"/><stop offset="0.5" stop-color="#c9dafa"/><stop offset="0.72" stop-color="#fbe070"/><stop offset="1" stop-color="#f0b030"/></linearGradient><linearGradient id="gsh" x1="0" y1="0" x2="1" y2="1"><stop offset="0" stop-color="#fafafa"/><stop offset="0.6" stop-color="#d0d0d4"/><stop offset="1" stop-color="#a4a4ac"/></linearGradient><linearGradient id="b4" x1="0" y1="0" x2="1" y2="0"><stop offset="0" stop-color="#8aa8f0"/><stop offset="0.5" stop-color="#dfe8fc"/><stop offset="1" stop-color="#7f9cec"/></linearGradient><linearGradient id="cyl5" x1="0" y1="0" x2="1" y2="0"><stop offset="0" stop-color="#8a9cf0"/><stop offset="0.35" stop-color="#c9d2fa"/><stop offset="1" stop-color="#6f82e4"/></linearGradient><radialGradient id="sph" cx="0.4" cy="0.32" r="0.75"><stop offset="0" stop-color="#fbf8d0"/><stop offset="0.35" stop-color="#e6da80"/><stop offset="1" stop-color="#b8a840"/></radialGradient><pattern id="hY" width="2" height="2" patternUnits="userSpaceOnUse"><rect width="2" height="2" fill="#f6ee6a"/><path d="M0 2 L2 0 M-0.5 0.5 L0.5 -0.5 M1.5 2.5 L2.5 1.5" stroke="#9aa020" stroke-width="0.6"/></pattern><pattern id="hG" width="2" height="2" patternUnits="userSpaceOnUse"><rect width="2" height="2" fill="#e4e4e4"/><path d="M0 2 L2 0 M-0.5 0.5 L0.5 -0.5 M1.5 2.5 L2.5 1.5" stroke="#8a8a8a" stroke-width="0.6"/></pattern><pattern id="hB" width="2" height="2" patternUnits="userSpaceOnUse"><rect width="2" height="2" fill="#c9d6f8"/><path d="M0 2 L2 0 M-0.5 0.5 L0.5 -0.5 M1.5 2.5 L2.5 1.5" stroke="#3a58c8" stroke-width="0.6"/></pattern><pattern id="hO" width="2" height="2" patternUnits="userSpaceOnUse"><rect width="2" height="2" fill="#fbd860"/><path d="M0 2 L2 0 M-0.5 0.5 L0.5 -0.5 M1.5 2.5 L2.5 1.5" stroke="#e08a20" stroke-width="0.6"/></pattern><linearGradient id="blt139" x1="0" y1="0" x2="1" y2="0"><stop offset="0" stop-color="#3f6ce0"/><stop offset="0.4" stop-color="#a9c4fa"/><stop offset="1" stop-color="#3058c8"/></linearGradient><linearGradient id="blt159" x1="0" y1="0" x2="1" y2="0"><stop offset="0" stop-color="#3f6ce0"/><stop offset="0.4" stop-color="#a9c4fa"/><stop offset="1" stop-color="#3058c8"/></linearGradient><linearGradient id="blt251" x1="0" y1="0" x2="1" y2="0"><stop offset="0" stop-color="#3f6ce0"/><stop offset="0.4" stop-color="#a9c4fa"/><stop offset="1" stop-color="#3058c8"/></linearGradient></defs>
<rect x="1.1" y="19.5" width="1.5" height="1.1" fill="#a4a4a4"/><rect x="2.3" y="20.5" width="0.9" height="0.9" fill="#d4d4d4"/>
<rect x="1.1" y="22.2" width="1.5" height="1.1" fill="#a4a4a4"/><rect x="2.3" y="23.2" width="0.9" height="0.9" fill="#d4d4d4"/>
<rect x="1.1" y="24.9" width="1.5" height="1.1" fill="#a4a4a4"/><rect x="2.3" y="25.9" width="0.9" height="0.9" fill="#d4d4d4"/>
<rect x="1.1" y="27.7" width="1.5" height="1.1" fill="#a4a4a4"/><rect x="2.3" y="28.7" width="0.9" height="0.9" fill="#d4d4d4"/>
<rect x="1.1" y="30.4" width="1.5" height="1.1" fill="#a4a4a4"/><rect x="2.3" y="31.4" width="0.9" height="0.9" fill="#d4d4d4"/>
<path d="M5.4 22.4 L7.6 20.6 L10.4 21.2 L10.4 25.6 L12.6 24.8 L14.4 25.8 L14.4 28.2 L10.0 29.8 L5.4 28.6 Z" fill="url(#nxi)" stroke="#0c1ea8" stroke-width="0.3"/>
<path d="M5.4 22.4 L7.6 20.6 L10.4 21.2 L8.2 22.8 Z" fill="#8fb0fc"/>
<path d="M6.0 23.4 L7.4 23.8 V27.8 L6.0 27.4 Z" fill="#6f94f8"/>
<path d="M10.4 25.6 L12.6 24.8 L14.4 25.8 L12.0 26.8 Z" fill="#5a80f4"/>
<path d="M8.6 22.6 V27.0 L12.4 26.4" fill="none" stroke="#e8f0ff" stroke-width="0.9" stroke-linecap="round" stroke-linejoin="round"/>
<rect x="1.1" y="37.5" width="1.5" height="1.1" fill="#a4a4a4"/><rect x="2.3" y="38.5" width="0.9" height="0.9" fill="#d4d4d4"/>
<rect x="1.1" y="40.2" width="1.5" height="1.1" fill="#a4a4a4"/><rect x="2.3" y="41.2" width="0.9" height="0.9" fill="#d4d4d4"/>
<rect x="1.1" y="42.9" width="1.5" height="1.1" fill="#a4a4a4"/><rect x="2.3" y="43.9" width="0.9" height="0.9" fill="#d4d4d4"/>
<rect x="1.1" y="45.7" width="1.5" height="1.1" fill="#a4a4a4"/><rect x="2.3" y="46.7" width="0.9" height="0.9" fill="#d4d4d4"/>
<rect x="1.1" y="48.4" width="1.5" height="1.1" fill="#a4a4a4"/><rect x="2.3" y="49.4" width="0.9" height="0.9" fill="#d4d4d4"/>
<rect x="1.1" y="51.1" width="1.5" height="1.1" fill="#a4a4a4"/><rect x="2.3" y="52.1" width="0.9" height="0.9" fill="#d4d4d4"/>
<rect x="1.1" y="53.8" width="1.5" height="1.1" fill="#a4a4a4"/><rect x="2.3" y="54.8" width="0.9" height="0.9" fill="#d4d4d4"/>
<circle cx="14.60" cy="46.60" r="6.30" fill="url(#glb)"/>
<path d="M10.2 49.5 C11.5 47.5 13.5 48.5 14.2 50.5 C15 52.3 12.5 52.8 11.2 51.8 Z" fill="#3cb84a"/>
<path d="M15.5 44.5 C17.5 43.5 20 44.8 20.5 47 C19.5 49.5 17.3 49.3 16.2 47.5 Z" fill="#3cb84a"/>
<path d="M7.0 52.0 C11 52.8 20.5 47 21.3 40.6" fill="none" stroke="#f0c030" stroke-width="1.5" stroke-linecap="round"/>
<path d="M7.0 52.0 C6.3 50.6 7.8 48.6 9.5 47.6" fill="none" stroke="#d8a820" stroke-width="1.1" stroke-linecap="round"/>
<polygon points="8.00,38.80 15.20,38.20 13.20,45.60" fill="#e8323c" stroke="#b81828" stroke-width="0.4" stroke-linejoin="round"/>
<polygon points="8.00,38.80 11.40,38.50 13.20,45.60" fill="#f0707a"/>
<polygon points="42.50,44.70 45.50,44.70 44.00,46.50" fill="#1a1a1a"/>
<path d="M52.6 39.2 H59.6 L62.8 42.4 V52.2 H52.6 Z" fill="url(#doc)" stroke="#a3a9e4" stroke-width="0.8"/>
<path d="M59.6 39.2 V42.4 H62.8" fill="#e6e8fb" stroke="#a3a9e4" stroke-width="0.7"/>
<path d="M71.2 42.0 L72.0 41.0 H76.0 L77.0 42.2 H83.0 V52.6 H71.2 Z" fill="#efe08e" stroke="#cdb54a" stroke-width="0.6"/>
<path d="M71.2 52.6 L73.8 45.0 H86.2 L83.4 52.6 Z" fill="url(#fold)" stroke="#cdb54a" stroke-width="0.6"/>
<path d="M76.6 41.6 C78.5 39.4 81.8 39.2 83.4 41.4 L84.8 40.4 L84.6 44.8 L80.4 43.6 L81.9 42.6 C80.8 41.3 78.6 41.3 77.6 42.4 Z" fill="#5cc468" stroke="#3a9a44" stroke-width="0.4"/>
<rect x="93.20" y="40.00" width="11.60" height="12.00" fill="url(#sav)" stroke="#5560c0" stroke-width="0.6"/>
<rect x="95.80" y="40.60" width="6.80" height="6.60" fill="#f2f2f6" stroke="#b8b8cc" stroke-width="0.4"/>
<rect x="96.20" y="48.20" width="6.60" height="3.80" fill="#34345a"/>
<rect x="97.40" y="49.00" width="2.00" height="2.80" fill="#5a78f0"/>
<line x1="111.60" y1="37.80" x2="111.60" y2="54.70" stroke="#cfcfcf" stroke-width="1"/>
<line x1="118.90" y1="41.70" x2="128.60" y2="51.70" stroke="#444" stroke-width="1.25" stroke-linecap="round"/>
<line x1="128.60" y1="41.70" x2="118.90" y2="51.70" stroke="#444" stroke-width="1.25" stroke-linecap="round"/>
<line x1="136.60" y1="37.80" x2="136.60" y2="54.70" stroke="#cfcfcf" stroke-width="1"/>
<path d="M142.2 46.9 L146.5 41.4 L147.5 43.3 C150 41.3 153.7 41.6 154.9 44.5 C155.9 47.3 153.4 50.9 150.5 53.1 C152 50 152.5 47.1 151.2 45.9 C150.3 45.1 149.3 45.4 148.7 46.0 L149.8 48.1 Z" fill="url(#und)"/>
<polygon points="162.00,44.90 165.00,44.90 163.50,46.70" fill="#1a1a1a"/>
<g transform="translate(325.8 0) scale(-1 1)">
<path d="M142.2 46.9 L146.5 41.4 L147.5 43.3 C150 41.3 153.7 41.6 154.9 44.5 C155.9 47.3 153.4 50.9 150.5 53.1 C152 50 152.5 47.1 151.2 45.9 C150.3 45.1 149.3 45.4 148.7 46.0 L149.8 48.1 Z" fill="url(#red)"/>
</g>
<line x1="189.50" y1="37.80" x2="189.50" y2="54.70" stroke="#cfcfcf" stroke-width="1"/>
<polygon points="199.10,37.80 203.80,42.10 199.10,46.40 194.40,42.10" fill="#3f5bd8" stroke="#26327e" stroke-width="0.8" stroke-linejoin="round"/>
<polygon points="199.10,39.60 201.90,42.10 199.10,44.60 196.30,42.10" fill="#eef2ff" stroke="#5a6ae0" stroke-width="0.5" stroke-linejoin="round"/>
<polygon points="199.60,40.60 201.60,42.10 199.60,43.80" fill="#3f5bd8"/>
<polygon points="204.80,45.00 209.80,49.20 204.80,53.40 199.80,49.20" fill="#b4c6f8" stroke="#8aa2f0" stroke-width="0.7" stroke-linejoin="round"/>
<polygon points="204.80,46.80 207.60,49.20 204.80,51.60 202.00,49.20" fill="#d8e2fd" stroke="#9ab0f4" stroke-width="0.5" stroke-linejoin="round"/>
<polygon points="194.30,47.30 197.60,50.00 194.30,52.70" fill="#e0453a"/>
<polygon points="215.30,44.70 218.30,44.70 216.80,46.50" fill="#1a1a1a"/>
<line x1="222.50" y1="37.80" x2="222.50" y2="54.70" stroke="#cfcfcf" stroke-width="1"/>
<g transform="rotate(-38 235 45.5)">
<ellipse cx="235.00" cy="45.50" rx="5.20" ry="3.40" fill="#3c55c8" stroke="#222a70" stroke-width="0.8"/>
<ellipse cx="235.20" cy="45.50" rx="3.60" ry="2.20" fill="#e4eaff" stroke="#5a6ae0" stroke-width="0.5"/>
<polygon points="235.60,44.00 237.60,45.50 235.60,47.00" fill="#3c55c8"/>
</g>
<path d="M238.6 41.6 L242.2 38.6 L241.7 42.8" fill="none" stroke="#3a5ae0" stroke-width="1.1"/>
<path d="M239.6 40.6 L241.9 38.9" fill="none" stroke="#3a5ae0" stroke-width="1.0"/>
<path d="M228.0 49.0 L227.2 53.0 L231.2 52.0" fill="none" stroke="#6a8af0" stroke-width="1.1"/>
<path d="M229.6 46.8 L228.4 50.2 L231.8 49.6" fill="none" stroke="#9ab0f6" stroke-width="0.9"/>
<rect x="255.20" y="39.50" width="7.20" height="5.20" fill="#eef2f2" stroke="#7b8c8c" stroke-width="0.9"/>
<rect x="248.40" y="47.60" width="6.60" height="5.60" fill="#eef2f2" stroke="#7b8c8c" stroke-width="0.9"/>
<polygon points="249.60,44.80 253.80,42.00 253.00,44.40" fill="#f07828"/>
<polygon points="249.60,44.80 252.60,41.80 253.80,42.00" fill="#e03c28"/>
<line x1="268.00" y1="37.80" x2="268.00" y2="54.70" stroke="#cfcfcf" stroke-width="1"/>
<circle cx="350.00" cy="44.60" r="2.90" fill="#fdfdfd" stroke="#858585" stroke-width="1.1"/>
<circle cx="350.00" cy="44.60" r="1.60" fill="none" stroke="#d8d8d8" stroke-width="0.6"/>
<line x1="347.80" y1="46.90" x2="345.20" y2="49.80" stroke="#858585" stroke-width="1.9" stroke-linecap="round"/>
<polygon points="360.90,49.50 364.10,49.50 362.50,51.30" fill="#1a1a1a"/>
<line x1="368.20" y1="37.80" x2="368.20" y2="54.70" stroke="#cfcfcf" stroke-width="1"/>
<rect x="370.7" y="37.5" width="1.5" height="1.1" fill="#a4a4a4"/><rect x="371.9" y="38.5" width="0.9" height="0.9" fill="#d4d4d4"/>
<rect x="370.7" y="40.2" width="1.5" height="1.1" fill="#a4a4a4"/><rect x="371.9" y="41.2" width="0.9" height="0.9" fill="#d4d4d4"/>
<rect x="370.7" y="42.9" width="1.5" height="1.1" fill="#a4a4a4"/><rect x="371.9" y="43.9" width="0.9" height="0.9" fill="#d4d4d4"/>
<rect x="370.7" y="45.7" width="1.5" height="1.1" fill="#a4a4a4"/><rect x="371.9" y="46.7" width="0.9" height="0.9" fill="#d4d4d4"/>
<rect x="370.7" y="48.4" width="1.5" height="1.1" fill="#a4a4a4"/><rect x="371.9" y="49.4" width="0.9" height="0.9" fill="#d4d4d4"/>
<rect x="370.7" y="51.1" width="1.5" height="1.1" fill="#a4a4a4"/><rect x="371.9" y="52.1" width="0.9" height="0.9" fill="#d4d4d4"/>
<rect x="370.7" y="53.8" width="1.5" height="1.1" fill="#a4a4a4"/><rect x="371.9" y="54.8" width="0.9" height="0.9" fill="#d4d4d4"/>
<rect x="376.60" y="39.40" width="14.20" height="12.60" fill="#f0f2fd" stroke="#9ea6ea" stroke-width="0.9"/>
<rect x="377.00" y="39.60" width="13.40" height="1.90" fill="#5f7fdc"/>
<polygon points="382.70,45.80 380.30,45.50 382.40,43.40" fill="#f0521e"/>
<line x1="381.90" y1="45.00" x2="379.30" y2="42.40" stroke="#f0521e" stroke-width="1.1"/>
<polygon points="384.70,45.80 387.10,45.50 385.00,43.40" fill="#f0521e"/>
<line x1="385.50" y1="45.00" x2="388.10" y2="42.40" stroke="#f0521e" stroke-width="1.1"/>
<polygon points="382.70,47.80 380.30,48.10 382.40,50.20" fill="#f0521e"/>
<line x1="381.90" y1="48.60" x2="379.30" y2="51.20" stroke="#f0521e" stroke-width="1.1"/>
<polygon points="384.70,47.80 387.10,48.10 385.00,50.20" fill="#f0521e"/>
<line x1="385.50" y1="48.60" x2="388.10" y2="51.20" stroke="#f0521e" stroke-width="1.1"/>
<polygon points="397.00,45.00 400.00,45.00 398.50,46.80" fill="#1a1a1a"/>
<polygon points="405.40,48.20 410.20,41.00 414.60,39.60 415.20,46.40 419.80,48.60 415.40,51.60 407.60,51.60" fill="#8d8d8d" stroke="#6a6a6a" stroke-width="0.5" stroke-linejoin="round"/>
<polygon points="410.20,41.00 414.60,39.60 415.20,46.40 408.20,48.00" fill="#b9b9b9"/>
<polygon points="408.20,48.00 415.20,46.40 419.80,48.60 412.60,50.40" fill="#d4d4d4"/>
<polygon points="405.40,48.20 408.20,48.00 412.60,50.40 415.40,51.60 407.60,51.60" fill="#7a7a7a"/>
<polygon points="425.70,45.00 428.70,45.00 427.20,46.80" fill="#1a1a1a"/>
<path d="M434.4 42.2 L440.0 39.0 L448.6 41.4 V50.4 L442.6 53.2 L434.4 50.0 Z" fill="#7f8ee2" stroke="#8e9ae8" stroke-width="0.6" stroke-linejoin="round"/>
<path d="M434.4 42.2 L442.6 44.6 V53.2 L434.4 50.0 Z" fill="url(#bc1)"/>
<path d="M434.4 42.2 L440.0 39.0 L448.6 41.4 L442.6 44.6 Z" fill="#ccd4fa"/>
<path d="M442.6 44.6 L448.6 41.4 V50.4 L442.6 53.2 Z" fill="#6f7fdc"/>
<polygon points="455.00,45.00 458.00,45.00 456.50,46.80" fill="#1a1a1a"/>
<polygon points="463.40,40.00 466.60,38.80 473.00,50.00 473.00,53.00 463.40,50.40" fill="#dcdcdc" stroke="#bdbdbd" stroke-width="0.5" stroke-linejoin="round"/>
<polygon points="467.60,40.60 470.60,39.40 476.60,41.60 476.60,47.60 473.00,49.60" fill="#eeb66e" stroke="#d89a48" stroke-width="0.4" stroke-linejoin="round"/>
<polygon points="467.60,40.60 473.00,49.60 473.00,43.00" fill="#dca25c"/>
<polygon points="463.40,40.00 466.60,38.80 473.00,50.00 469.80,51.60" fill="#d0c4b4" opacity="0.8"/>
<polygon points="484.40,39.60 487.00,38.80 494.20,50.40 494.20,53.20 484.40,50.20" fill="#b9c8f2" stroke="#8fa2e0" stroke-width="0.5" stroke-linejoin="round"/>
<polygon points="489.40,41.60 492.60,40.60 497.20,42.20 497.20,48.60 494.20,50.00" fill="#98e29a" stroke="#62bc66" stroke-width="0.4" stroke-linejoin="round"/>
<polygon points="484.40,39.60 494.20,53.20 494.20,50.40 487.00,38.80" fill="#9ac0e8"/>
<polygon points="503.90,45.00 506.90,45.00 505.40,46.80" fill="#1a1a1a"/>
<rect x="511.40" y="38.90" width="15.20" height="14.80" fill="#c9c9c9" stroke="#5c5c5c" stroke-width="0.7"/>
<rect x="511.10" y="38.20" width="15.80" height="1.70" fill="#2c2c2c"/>
<polygon points="532.70,45.00 535.70,45.00 534.20,46.80" fill="#1a1a1a"/>
<line x1="539.60" y1="37.80" x2="539.60" y2="54.70" stroke="#cfcfcf" stroke-width="1"/>
<polygon points="549.50,41.40 554.10,39.60 554.10,50.60 549.50,52.60" fill="#7f9dec" stroke="#5a74d0" stroke-width="0.5" stroke-linejoin="round"/>
<polygon points="550.70,42.40 553.50,41.20 553.50,49.40 550.70,50.80" fill="#b4c6f6"/>
<polygon points="546.30,42.60 549.50,41.40 549.50,52.60 546.30,53.60" fill="#fafafa" stroke="#222" stroke-width="0.8" stroke-linejoin="round"/>
<polygon points="546.30,42.60 549.50,41.40 554.10,39.60 550.90,40.60" fill="#e0e4f4" stroke="#444" stroke-width="0.5" stroke-linejoin="round"/>
<line x1="553.00" y1="46.60" x2="558.40" y2="46.60" stroke="#2a36e0" stroke-width="1.2"/>
<polygon points="557.40,44.60 560.20,46.60 557.40,48.60" fill="#2a36e0"/>
<polygon points="563.80,42.00 567.60,44.60 563.80,47.20" fill="#2fb84a"/>
<polygon points="565.80,47.00 569.40,49.60 565.80,52.20" fill="#e0483c"/>
<polygon points="570.80,41.40 575.40,39.60 575.40,50.60 570.80,52.60" fill="#7f9dec" stroke="#5a74d0" stroke-width="0.5" stroke-linejoin="round"/>
<polygon points="572.00,42.40 574.80,41.20 574.80,49.40 572.00,50.80" fill="#b4c6f6"/>
<polygon points="567.60,42.60 570.80,41.40 570.80,52.60 567.60,53.60" fill="#fafafa" stroke="#222" stroke-width="0.8" stroke-linejoin="round"/>
<polygon points="567.60,42.60 570.80,41.40 575.40,39.60 572.20,40.60" fill="#e0e4f4" stroke="#444" stroke-width="0.5" stroke-linejoin="round"/>
<line x1="574.00" y1="46.60" x2="578.60" y2="46.60" stroke="#2a36e0" stroke-width="1.2"/>
<polygon points="577.60,44.60 580.40,46.60 577.60,48.60" fill="#2a36e0"/>
<polygon points="585.20,49.50 588.40,49.50 586.80,51.30" fill="#1a1a1a"/>
<line x1="593.00" y1="37.80" x2="593.00" y2="54.70" stroke="#cfcfcf" stroke-width="1"/>
<rect x="598.5" y="37.5" width="1.5" height="1.1" fill="#a4a4a4"/><rect x="599.7" y="38.5" width="0.9" height="0.9" fill="#d4d4d4"/>
<rect x="598.5" y="40.2" width="1.5" height="1.1" fill="#a4a4a4"/><rect x="599.7" y="41.2" width="0.9" height="0.9" fill="#d4d4d4"/>
<rect x="598.5" y="42.9" width="1.5" height="1.1" fill="#a4a4a4"/><rect x="599.7" y="43.9" width="0.9" height="0.9" fill="#d4d4d4"/>
<rect x="598.5" y="45.7" width="1.5" height="1.1" fill="#a4a4a4"/><rect x="599.7" y="46.7" width="0.9" height="0.9" fill="#d4d4d4"/>
<rect x="598.5" y="48.4" width="1.5" height="1.1" fill="#a4a4a4"/><rect x="599.7" y="49.4" width="0.9" height="0.9" fill="#d4d4d4"/>
<rect x="598.5" y="51.1" width="1.5" height="1.1" fill="#a4a4a4"/><rect x="599.7" y="52.1" width="0.9" height="0.9" fill="#d4d4d4"/>
<rect x="598.5" y="53.8" width="1.5" height="1.1" fill="#a4a4a4"/><rect x="599.7" y="54.8" width="0.9" height="0.9" fill="#d4d4d4"/>
<polygon points="604.20,41.80 609.60,39.40 617.00,40.80 611.40,43.40" fill="#7fcf8a" stroke="#7f8a84" stroke-width="0.4" stroke-linejoin="round"/>
<polygon points="604.20,44.00 609.60,41.60 617.00,43.00 611.40,45.60" fill="#d0d4d0" stroke="#7f8a84" stroke-width="0.4" stroke-linejoin="round"/>
<polygon points="604.20,46.20 609.60,43.80 617.00,45.20 611.40,47.80" fill="#c4c8c4" stroke="#7f8a84" stroke-width="0.4" stroke-linejoin="round"/>
<polygon points="604.20,48.40 609.60,46.00 617.00,47.40 611.40,50.00" fill="#b8bcb8" stroke="#7f8a84" stroke-width="0.4" stroke-linejoin="round"/>
<polygon points="604.20,50.60 609.60,48.20 617.00,49.60 611.40,52.20" fill="#d0d4d0" stroke="#7f8a84" stroke-width="0.4" stroke-linejoin="round"/>
<rect x="610.00" y="44.60" width="8.60" height="9.00" fill="#dfe3fb" stroke="#9ea6ea" stroke-width="0.7"/>
<rect x="611.20" y="45.80" width="1.60" height="1.60" fill="#e6c23c"/>
<rect x="611.20" y="48.40" width="1.60" height="1.60" fill="#5a6ee0"/>
<rect x="611.20" y="51.00" width="1.60" height="1.60" fill="#e6c23c"/>
<line x1="613.80" y1="46.60" x2="617.40" y2="46.60" stroke="#7a7aa0" stroke-width="0.8"/>
<line x1="613.80" y1="49.20" x2="617.40" y2="49.20" stroke="#7a7aa0" stroke-width="0.8"/>
<line x1="613.80" y1="51.80" x2="617.40" y2="51.80" stroke="#7a7aa0" stroke-width="0.8"/>
<line x1="625.50" y1="50.40" x2="625.50" y2="42.60" stroke="#e03434" stroke-width="1.0"/>
<polygon points="624.20,43.40 625.50,40.60 626.80,43.40" fill="#e03434"/>
<line x1="625.50" y1="50.40" x2="631.60" y2="47.60" stroke="#e03434" stroke-width="1.0"/>
<polygon points="630.60,46.60 633.20,46.90 631.40,48.80" fill="#e03434"/>
<line x1="625.50" y1="50.40" x2="631.80" y2="53.00" stroke="#e03434" stroke-width="1.0"/>
<polygon points="631.60,51.60 633.60,53.80 630.80,53.80" fill="#e03434"/>
<circle cx="635.60" cy="42.20" r="3.20" fill="none" stroke="#3f6cd4" stroke-width="1.3"/>
<polygon points="637.60,38.60 639.60,40.80 636.80,41.00" fill="#3f6cd4"/>
<polygon points="633.40,45.80 631.60,43.60 634.40,43.40" fill="#3f6cd4"/>
<polygon points="644.90,45.00 647.90,45.00 646.40,46.80" fill="#1a1a1a"/>
<line x1="652.80" y1="37.80" x2="652.80" y2="54.70" stroke="#cfcfcf" stroke-width="1"/>
<polygon points="662.40,42.00 666.80,38.80 670.80,40.20 671.40,43.00 666.00,45.40 663.00,44.60" fill="#ecca96" stroke="#c09a5c" stroke-width="0.4" stroke-linejoin="round"/>
<polygon points="668.60,38.60 671.60,38.00 672.60,41.60 670.40,43.00" fill="#5a6ae0" stroke="#3a48b8" stroke-width="0.4" stroke-linejoin="round"/>
<polygon points="662.00,44.40 667.20,49.00 662.00,53.60 656.80,49.00" fill="#3f5bd8" stroke="#26327e" stroke-width="0.8" stroke-linejoin="round"/>
<polygon points="662.00,46.00 665.20,49.00 662.00,52.00 658.80,49.00" fill="#eef2ff" stroke="#5a6ae0" stroke-width="0.5" stroke-linejoin="round"/>
<polygon points="662.00,46.60 664.60,49.00 662.00,51.40" fill="#3f5bd8"/>
<line x1="679.70" y1="50.60" x2="679.70" y2="41.60" stroke="#e03434" stroke-width="1.0"/>
<polygon points="678.40,42.40 679.70,39.40 681.00,42.40" fill="#e03434"/>
<line x1="679.70" y1="50.60" x2="688.70" y2="45.60" stroke="#e03434" stroke-width="1.0"/>
<polygon points="687.70,44.40 690.30,44.60 688.90,46.90" fill="#e03434"/>
<line x1="679.70" y1="50.60" x2="688.70" y2="53.40" stroke="#e03434" stroke-width="1.0"/>
<polygon points="688.30,52.00 690.50,53.90 687.70,54.40" fill="#e03434"/>
<circle cx="679.70" cy="50.40" r="1.10" fill="#fff" stroke="#e03434" stroke-width="0.8"/>
<line x1="699.60" y1="50.60" x2="699.60" y2="41.60" stroke="#e03434" stroke-width="1.0"/>
<polygon points="698.30,42.40 699.60,39.40 700.90,42.40" fill="#e03434"/>
<line x1="699.60" y1="50.60" x2="708.60" y2="45.60" stroke="#e03434" stroke-width="1.0"/>
<polygon points="707.60,44.40 710.20,44.60 708.80,46.90" fill="#e03434"/>
<line x1="699.60" y1="50.60" x2="708.60" y2="53.40" stroke="#e03434" stroke-width="1.0"/>
<polygon points="708.20,52.00 710.40,53.90 707.60,54.40" fill="#e03434"/>
<circle cx="699.60" cy="50.40" r="1.10" fill="#fff" stroke="#e03434" stroke-width="0.8"/>
<rect x="1.1" y="60.5" width="1.5" height="1.1" fill="#a4a4a4"/><rect x="2.3" y="61.5" width="0.9" height="0.9" fill="#d4d4d4"/>
<rect x="1.1" y="63.2" width="1.5" height="1.1" fill="#a4a4a4"/><rect x="2.3" y="64.2" width="0.9" height="0.9" fill="#d4d4d4"/>
<rect x="1.1" y="65.9" width="1.5" height="1.1" fill="#a4a4a4"/><rect x="2.3" y="66.9" width="0.9" height="0.9" fill="#d4d4d4"/>
<rect x="1.1" y="68.7" width="1.5" height="1.1" fill="#a4a4a4"/><rect x="2.3" y="69.7" width="0.9" height="0.9" fill="#d4d4d4"/>
<rect x="1.1" y="71.4" width="1.5" height="1.1" fill="#a4a4a4"/><rect x="2.3" y="72.4" width="0.9" height="0.9" fill="#d4d4d4"/>
<rect x="1.1" y="74.1" width="1.5" height="1.1" fill="#a4a4a4"/><rect x="2.3" y="75.1" width="0.9" height="0.9" fill="#d4d4d4"/>
<rect x="1.1" y="76.8" width="1.5" height="1.1" fill="#a4a4a4"/><rect x="2.3" y="77.8" width="0.9" height="0.9" fill="#d4d4d4"/>
<polygon points="7.30,65.50 14.10,68.50 14.60,75.90 7.30,72.60" fill="url(#cbL)" stroke="#ea5a48" stroke-width="0.6" stroke-linejoin="round"/>
<polygon points="14.10,68.50 20.90,64.60 20.90,71.70 14.60,75.90" fill="url(#cbR)" stroke="#c9a4e2" stroke-width="0.4" stroke-linejoin="round"/>
<polygon points="7.30,65.50 14.60,61.30 20.90,64.60 14.10,68.50" fill="url(#cbT)" stroke="#a560d4" stroke-width="0.4" stroke-linejoin="round"/>
<polygon points="15.60,69.60 15.60,67.20 14.40,67.20 16.60,65.00 18.80,67.20 17.60,67.20 17.60,69.60 20.00,69.60 20.00,68.40 22.20,70.60 20.00,72.80 20.00,71.60 17.60,71.60 17.60,74.00 18.80,74.00 16.60,76.20 14.40,74.00 15.60,74.00 15.60,71.60 13.20,71.60 13.20,72.80 11.00,70.60 13.20,68.40 13.20,69.60" fill="#f2f2f2" stroke="#666" stroke-width="0.65" stroke-linejoin="round"/>
<polygon points="27.90,67.40 30.90,67.40 29.40,69.20" fill="#1a1a1a"/>
<polygon points="36.20,65.50 43.00,68.50 43.50,75.90 36.20,72.60" fill="url(#cbL)" stroke="#ea5a48" stroke-width="0.6" stroke-linejoin="round"/>
<polygon points="43.00,68.50 49.80,64.60 49.80,71.70 43.50,75.90" fill="url(#cbR)" stroke="#c9a4e2" stroke-width="0.4" stroke-linejoin="round"/>
<polygon points="36.20,65.50 43.50,61.30 49.80,64.60 43.00,68.50" fill="url(#cbT)" stroke="#a560d4" stroke-width="0.4" stroke-linejoin="round"/>
<polygon points="44.20,69.40 44.20,66.80 43.00,66.80 45.20,64.60 47.40,66.80 46.20,66.80 46.20,69.40 48.80,69.40 48.80,68.20 51.00,70.40 48.80,72.60 48.80,71.40 46.20,71.40 46.20,74.00 47.40,74.00 45.20,76.20 43.00,74.00 44.20,74.00 44.20,71.40 41.60,71.40 41.60,72.60 39.40,70.40 41.60,68.20 41.60,69.40" fill="#f2f2f2" stroke="#666" stroke-width="0.65" stroke-linejoin="round"/>
<polygon points="56.60,65.50 63.40,68.50 63.90,75.90 56.60,72.60" fill="url(#cbL)" stroke="#ea5a48" stroke-width="0.6" stroke-linejoin="round"/>
<polygon points="63.40,68.50 70.20,64.60 70.20,71.70 63.90,75.90" fill="url(#cbR)" stroke="#c9a4e2" stroke-width="0.4" stroke-linejoin="round"/>
<polygon points="56.60,65.50 63.90,61.30 70.20,64.60 63.40,68.50" fill="url(#cbT)" stroke="#a560d4" stroke-width="0.4" stroke-linejoin="round"/>
<line x1="66.80" y1="66.60" x2="66.80" y2="74.20" stroke="#222" stroke-width="1.3"/>
<circle cx="66.80" cy="66.40" r="1.20" fill="#fff" stroke="#222" stroke-width="0.7"/>
<path d="M62.6 73.0 C64.0 75.6 69.6 75.6 71.0 73.0" fill="none" stroke="#222" stroke-width="1.2"/>
<path d="M64.0 71.6 H69.6" fill="none" stroke="#222" stroke-width="0.9"/>
<polygon points="77.20,65.50 84.00,68.50 84.50,75.90 77.20,72.60" fill="url(#cbL)" stroke="#ea5a48" stroke-width="0.6" stroke-linejoin="round"/>
<polygon points="84.00,68.50 90.80,64.60 90.80,71.70 84.50,75.90" fill="url(#cbR)" stroke="#c9a4e2" stroke-width="0.4" stroke-linejoin="round"/>
<polygon points="77.20,65.50 84.50,61.30 90.80,64.60 84.00,68.50" fill="url(#cbT)" stroke="#a560d4" stroke-width="0.4" stroke-linejoin="round"/>
<rect x="86.00" y="66.80" width="5.60" height="5.60" fill="#fafafa" stroke="#222" stroke-width="0.9"/>
<rect x="83.20" y="69.60" width="5.60" height="5.90" fill="#fafafa" stroke="#222" stroke-width="0.9"/>
<path d="M98.6 63.6 V73.8 C98.6 76.4 110.2 76.4 110.2 73.8 V63.6 Z" fill="url(#cyL)" stroke="#e06838" stroke-width="0.5"/>
<ellipse cx="104.40" cy="63.60" rx="5.80" ry="2.20" fill="#c592e6" stroke="#a560d4" stroke-width="0.5"/>
<polygon points="104.60,75.40 108.30,69.40 112.00,75.40" fill="#fafafa" stroke="#444" stroke-width="0.9" stroke-linejoin="round"/>
<polygon points="118.40,65.50 125.20,68.50 125.70,75.90 118.40,72.60" fill="url(#cbL)" stroke="#ea5a48" stroke-width="0.6" stroke-linejoin="round"/>
<polygon points="125.20,68.50 132.00,64.60 132.00,71.70 125.70,75.90" fill="url(#cbR)" stroke="#c9a4e2" stroke-width="0.4" stroke-linejoin="round"/>
<polygon points="118.40,65.50 125.70,61.30 132.00,64.60 125.20,68.50" fill="url(#cbT)" stroke="#a560d4" stroke-width="0.4" stroke-linejoin="round"/>
<rect x="127.60" y="67.00" width="4.20" height="2.60" fill="#e8e8e8" stroke="#555" stroke-width="0.7"/>
<rect x="127.60" y="72.60" width="4.20" height="2.60" fill="#e8e8e8" stroke="#555" stroke-width="0.7"/>
<line x1="126.40" y1="71.10" x2="132.80" y2="71.10" stroke="#555" stroke-width="0.8"/>
<polygon points="140.60,66.00 147.60,61.60 154.20,64.00 154.20,72.60 147.40,76.00 140.60,73.20" fill="#c592e6" stroke="#a560d4" stroke-width="0.5" stroke-linejoin="round"/>
<polygon points="140.60,66.00 147.60,61.60 154.20,64.00 147.40,67.60" fill="#b070dc"/>
<path d="M141.8 66.8 C143.5 63.6 148.5 63.4 151.6 65.0 C149.6 66.6 148.6 69.6 148.8 72.2 C146.6 71.0 143.0 70.6 141.8 71.6 Z" fill="url(#cbL)" stroke="#e06838" stroke-width="0.5"/>
<polygon points="146.00,75.60 149.60,69.80 153.20,75.60" fill="#fafafa" stroke="#444" stroke-width="0.9" stroke-linejoin="round"/>
<polygon points="159.90,67.40 162.90,67.40 161.40,69.20" fill="#1a1a1a"/>
<polygon points="168.00,65.50 174.80,68.50 175.30,75.90 168.00,72.60" fill="url(#cbL)" stroke="#ea5a48" stroke-width="0.6" stroke-linejoin="round"/>
<polygon points="174.80,68.50 181.60,64.60 181.60,71.70 175.30,75.90" fill="url(#cbR)" stroke="#c9a4e2" stroke-width="0.4" stroke-linejoin="round"/>
<polygon points="168.00,65.50 175.30,61.30 181.60,64.60 174.80,68.50" fill="url(#cbT)" stroke="#a560d4" stroke-width="0.4" stroke-linejoin="round"/>
<line x1="173.60" y1="66.60" x2="181.60" y2="74.80" stroke="#4a4a4a" stroke-width="1.1"/>
<line x1="181.60" y1="66.20" x2="173.20" y2="75.00" stroke="#4a4a4a" stroke-width="1.1"/>
<polygon points="188.60,65.50 195.40,68.50 195.90,75.90 188.60,72.60" fill="url(#cbL)" stroke="#ea5a48" stroke-width="0.6" stroke-linejoin="round"/>
<polygon points="195.40,68.50 202.20,64.60 202.20,71.70 195.90,75.90" fill="url(#cbR)" stroke="#c9a4e2" stroke-width="0.4" stroke-linejoin="round"/>
<polygon points="188.60,65.50 195.90,61.30 202.20,64.60 195.40,68.50" fill="url(#cbT)" stroke="#a560d4" stroke-width="0.4" stroke-linejoin="round"/>
<rect x="195.80" y="65.40" width="4.20" height="5.20" fill="#e4eafc" stroke="#6f86d8" stroke-width="0.6"/>
<rect x="198.60" y="69.80" width="4.40" height="5.40" fill="#e4eafc" stroke="#6f86d8" stroke-width="0.6"/>
<line x1="196.80" y1="67.40" x2="199.00" y2="67.40" stroke="#6f86d8" stroke-width="0.6"/>
<line x1="199.60" y1="72.00" x2="202.00" y2="72.00" stroke="#6f86d8" stroke-width="0.6"/>
<polygon points="209.30,67.40 212.30,67.40 210.80,69.20" fill="#1a1a1a"/>
<polygon points="217.20,65.50 224.00,68.50 224.50,75.90 217.20,72.60" fill="url(#cbL)" stroke="#ea5a48" stroke-width="0.6" stroke-linejoin="round"/>
<polygon points="224.00,68.50 230.80,64.60 230.80,71.70 224.50,75.90" fill="url(#cbR)" stroke="#c9a4e2" stroke-width="0.4" stroke-linejoin="round"/>
<polygon points="217.20,65.50 224.50,61.30 230.80,64.60 224.00,68.50" fill="url(#cbT)" stroke="#a560d4" stroke-width="0.4" stroke-linejoin="round"/>
<rect x="227.00" y="65.60" width="3.80" height="4.00" fill="#ececec" stroke="#777" stroke-width="0.7"/>
<rect x="227.00" y="71.40" width="3.80" height="4.00" fill="#ececec" stroke="#777" stroke-width="0.7"/>
<polygon points="237.80,67.40 240.80,67.40 239.30,69.20" fill="#1a1a1a"/>
<polygon points="246.00,65.50 252.80,68.50 253.30,75.90 246.00,72.60" fill="url(#cbL)" stroke="#ea5a48" stroke-width="0.6" stroke-linejoin="round"/>
<polygon points="252.80,68.50 259.60,64.60 259.60,71.70 253.30,75.90" fill="url(#cbR)" stroke="#c9a4e2" stroke-width="0.4" stroke-linejoin="round"/>
<polygon points="246.00,65.50 253.30,61.30 259.60,64.60 252.80,68.50" fill="url(#cbT)" stroke="#a560d4" stroke-width="0.4" stroke-linejoin="round"/>
<line x1="252.00" y1="70.40" x2="252.00" y2="75.40" stroke="#333" stroke-width="0.8"/>
<line x1="260.40" y1="70.40" x2="260.40" y2="75.40" stroke="#333" stroke-width="0.8"/>
<line x1="252.00" y1="73.20" x2="260.40" y2="73.20" stroke="#333" stroke-width="0.7"/>
<polygon points="252.20,73.20 254.00,72.20 254.00,74.20" fill="#333"/>
<polygon points="260.20,73.20 258.40,72.20 258.40,74.20" fill="#333"/>
<circle cx="256.20" cy="69.40" r="1.20" fill="#f4f4f4" stroke="#333" stroke-width="0.6"/>
<polygon points="266.90,67.40 269.90,67.40 268.40,69.20" fill="#1a1a1a"/>
<polygon points="274.20,65.50 281.00,68.50 281.50,75.90 274.20,72.60" fill="url(#cbL)" stroke="#ea5a48" stroke-width="0.6" stroke-linejoin="round"/>
<polygon points="281.00,68.50 287.80,64.60 287.80,71.70 281.50,75.90" fill="url(#cbR)" stroke="#c9a4e2" stroke-width="0.4" stroke-linejoin="round"/>
<polygon points="274.20,65.50 281.50,61.30 287.80,64.60 281.00,68.50" fill="url(#cbT)" stroke="#a560d4" stroke-width="0.4" stroke-linejoin="round"/>
<rect x="281.60" y="69.00" width="5.00" height="5.00" fill="#f6f6f6" stroke="#333" stroke-width="0.8"/>
<rect x="284.00" y="71.20" width="4.80" height="4.80" fill="none" stroke="#333" stroke-width="0.8"/>
<rect x="280.60" y="75.00" width="1.20" height="1.20" fill="#2a4ae0"/>
<rect x="288.20" y="68.00" width="1.20" height="1.20" fill="#2a4ae0"/>
<rect x="288.40" y="75.60" width="1.20" height="1.20" fill="#2a4ae0"/>
<polygon points="295.80,65.50 302.60,68.50 303.10,75.90 295.80,72.60" fill="#e9d5f6" stroke="#b583dc" stroke-width="0.6" stroke-linejoin="round"/>
<polygon points="302.60,68.50 309.40,64.60 309.40,71.70 303.10,75.90" fill="#dcc0f0" stroke="#b583dc" stroke-width="0.6" stroke-linejoin="round"/>
<polygon points="295.80,65.50 303.10,61.30 309.40,64.60 302.60,68.50" fill="#cfa8ea" stroke="#b583dc" stroke-width="0.6" stroke-linejoin="round"/>
<path d="M300.4 63.6 L305.2 65.0 V73.6 L303.4 74.4" fill="none" stroke="#f08a30" stroke-width="1.3"/>
<polygon points="295.80,75.60 299.60,70.00 303.40,75.60" fill="#fafafa" stroke="#444" stroke-width="0.9" stroke-linejoin="round"/>
<polygon points="316.20,65.50 323.00,68.50 323.50,75.90 316.20,72.60" fill="#e9d5f6" stroke="#b583dc" stroke-width="0.6" stroke-linejoin="round"/>
<polygon points="323.00,68.50 329.80,64.60 329.80,71.70 323.50,75.90" fill="#dcc0f0" stroke="#b583dc" stroke-width="0.6" stroke-linejoin="round"/>
<polygon points="316.20,65.50 323.50,61.30 329.80,64.60 323.00,68.50" fill="#cfa8ea" stroke="#b583dc" stroke-width="0.6" stroke-linejoin="round"/>
<line x1="316.60" y1="65.20" x2="323.00" y2="68.00" stroke="#e84838" stroke-width="1.3"/>
<polygon points="324.40,69.60 324.40,67.60 323.20,67.60 325.40,65.40 327.60,67.60 326.40,67.60 326.40,69.60 328.40,69.60 328.40,68.40 330.60,70.60 328.40,72.80 328.40,71.60 326.40,71.60 326.40,73.60 327.60,73.60 325.40,75.80 323.20,73.60 324.40,73.60 324.40,71.60 322.40,71.60 322.40,72.80 320.20,70.60 322.40,68.40 322.40,69.60" fill="#f2f2f2" stroke="#666" stroke-width="0.65" stroke-linejoin="round"/>
<polygon points="336.70,67.10 339.70,67.10 338.20,68.90" fill="#1a1a1a"/>
<polygon points="343.90,72.30 347.10,72.30 345.50,74.10" fill="#1a1a1a"/>
<line x1="350.20" y1="60.80" x2="350.20" y2="77.70" stroke="#cfcfcf" stroke-width="1"/>
<rect x="353.5" y="60.5" width="1.5" height="1.1" fill="#a4a4a4"/><rect x="354.7" y="61.5" width="0.9" height="0.9" fill="#d4d4d4"/>
<rect x="353.5" y="63.2" width="1.5" height="1.1" fill="#a4a4a4"/><rect x="354.7" y="64.2" width="0.9" height="0.9" fill="#d4d4d4"/>
<rect x="353.5" y="65.9" width="1.5" height="1.1" fill="#a4a4a4"/><rect x="354.7" y="66.9" width="0.9" height="0.9" fill="#d4d4d4"/>
<rect x="353.5" y="68.7" width="1.5" height="1.1" fill="#a4a4a4"/><rect x="354.7" y="69.7" width="0.9" height="0.9" fill="#d4d4d4"/>
<rect x="353.5" y="71.4" width="1.5" height="1.1" fill="#a4a4a4"/><rect x="354.7" y="72.4" width="0.9" height="0.9" fill="#d4d4d4"/>
<rect x="353.5" y="74.1" width="1.5" height="1.1" fill="#a4a4a4"/><rect x="354.7" y="75.1" width="0.9" height="0.9" fill="#d4d4d4"/>
<rect x="353.5" y="76.8" width="1.5" height="1.1" fill="#a4a4a4"/><rect x="354.7" y="77.8" width="0.9" height="0.9" fill="#d4d4d4"/>
<line x1="361.80" y1="74.00" x2="372.00" y2="63.80" stroke="#444" stroke-width="0.9"/>
<circle cx="361.80" cy="74.00" r="1.25" fill="#e23a34"/>
<circle cx="372.00" cy="63.80" r="1.25" fill="#e23a34"/>
<path d="M381.4 63.3 C387.0 62.8 392.6 66.6 393.6 74.0" fill="none" stroke="#444" stroke-width="0.9"/>
<circle cx="381.40" cy="63.30" r="1.25" fill="#e23a34"/>
<circle cx="390.00" cy="65.80" r="1.25" fill="#e23a34"/>
<circle cx="393.60" cy="74.00" r="1.25" fill="#e23a34"/>
<rect x="401.60" y="64.40" width="12.80" height="9.00" fill="none" stroke="#333" stroke-width="0.9"/>
<circle cx="401.60" cy="64.40" r="1.25" fill="#e23a34"/>
<circle cx="414.40" cy="73.40" r="1.25" fill="#e23a34"/>
<path d="M425.8 62.8 L422.8 68.8 L425.8 67.4 L431.2 70.4 L435.4 67.0 L431.2 74.0" fill="none" stroke="#8a8a8a" stroke-width="0.7"/>
<path d="M422.8 68.8 C424.5 66.5 427.5 67.5 429.0 69.0 C430.5 70.6 433.5 69.5 435.4 67.0" fill="none" stroke="#444" stroke-width="0.8"/>
<circle cx="425.80" cy="62.80" r="0.90" fill="#9a9a9a"/>
<circle cx="422.80" cy="68.80" r="0.90" fill="#9a9a9a"/>
<circle cx="435.40" cy="67.00" r="0.90" fill="#9a9a9a"/>
<circle cx="431.20" cy="74.00" r="0.90" fill="#9a9a9a"/>
<circle cx="425.90" cy="67.40" r="1.25" fill="#e23a34"/>
<circle cx="431.20" cy="70.30" r="1.25" fill="#e23a34"/>
<text x="442.6" y="75.0" font-family="Liberation Serif,serif" font-weight="bold" font-size="18.4" fill="#333">A</text>
<path d="M463.4 74.6 V66.6 C463.6 62.4 469.4 62.4 470.6 65.4 C473.6 63.4 477.6 66.4 476.2 70.2 C475.0 73.2 471.4 75.2 468.4 75.4 H463.4 Z" fill="#fff" stroke="#222" stroke-width="0.9"/>
<g transform="translate(469.6 69.8) scale(0.68) translate(-469.6 -69.8)">
<path d="M463.4 74.6 V66.6 C463.6 62.4 469.4 62.4 470.6 65.4 C473.6 63.4 477.6 66.4 476.2 70.2 C475.0 73.2 471.4 75.2 468.4 75.4 H463.4 Z" fill="none" stroke="#e03030" stroke-width="1.2"/>
</g>
<path d="M488.4 62.2 C485.6 61.4 484.0 63.0 484.2 64.6 C484.4 66.2 486.2 66.8 488.2 66.4" fill="none" stroke="#222" stroke-width="0.9"/>
<path d="M488.4 71.8 C485.6 71.0 484.0 72.6 484.2 74.2 C484.4 75.6 486.2 76.0 488.2 75.6" fill="none" stroke="#222" stroke-width="0.9"/>
<line x1="489.00" y1="64.60" x2="489.00" y2="76.00" stroke="#3a48e0" stroke-width="0.6" stroke-dasharray="1.2 1"/>
<line x1="495.00" y1="63.00" x2="495.00" y2="74.00" stroke="#3a48e0" stroke-width="0.6" stroke-dasharray="1.2 1"/>
<line x1="492.00" y1="66.00" x2="492.00" y2="70.40" stroke="#f08a30" stroke-width="1.3"/>
<polygon points="490.20,69.60 493.80,69.60 492.00,72.20" fill="#f08a30"/>
<path d="M489.0 75.6 L495.0 72.4" fill="none" stroke="#e03030" stroke-width="0.9"/>
<path d="M495.0 72.4 C496.6 72.0 497.6 72.6 498.2 73.4" fill="none" stroke="#222" stroke-width="0.9"/>
<line x1="495.60" y1="63.40" x2="498.40" y2="63.40" stroke="#222" stroke-width="0.9"/>
<polygon points="504.40,68.60 512.60,66.60 519.60,71.60 511.60,75.40" fill="#b4d0ee" stroke="#7d9cc8" stroke-width="0.5" stroke-linejoin="round"/>
<polygon points="505.60,69.40 512.20,67.80 515.00,69.80 508.60,71.60" fill="#d8e8f8"/>
<line x1="508.60" y1="68.20" x2="515.60" y2="73.40" stroke="#f07838" stroke-width="1.1"/>
<line x1="506.60" y1="61.80" x2="517.00" y2="63.80" stroke="#2a36e0" stroke-width="0.9"/>
<line x1="513.00" y1="63.40" x2="513.00" y2="66.60" stroke="#e03030" stroke-width="0.8"/>
<polygon points="511.60,65.60 514.40,65.60 513.00,67.80" fill="#e03030"/>
<polygon points="524.80,67.00 533.60,63.40 539.60,70.40 531.00,74.40" fill="#b4d0ee" stroke="#7d9cc8" stroke-width="0.5" stroke-linejoin="round"/>
<polygon points="529.60,62.00 535.00,64.20 535.40,76.00 529.80,73.00" fill="#c6dcf2" stroke="#7d9cc8" stroke-width="0.5" stroke-linejoin="round" opacity="0.85"/>
<line x1="528.40" y1="65.80" x2="535.60" y2="72.60" stroke="#f0562e" stroke-width="1.2"/>
<path d="M545.0 64.0 C546.6 62.6 549.0 63.6 549.2 62.0 C551.0 61.6 553.0 62.6 553.0 64.0 V73.6 C551.6 75.4 546.6 75.4 545.0 73.8 Z" fill="url(#sh5)" stroke="#4f68d0" stroke-width="0.5"/>
<path d="M549.2 62.0 C549.8 63.4 552.0 63.2 553.0 64.0" fill="none" stroke="#4f68d0" stroke-width="0.5"/>
<line x1="553.60" y1="68.70" x2="556.40" y2="68.70" stroke="#f08a30" stroke-width="1.2"/>
<polygon points="555.80,67.00 558.20,68.70 555.80,70.40" fill="#f07030"/>
<path d="M557.0 62.6 C560.6 65.6 560.6 71.6 557.0 74.4" fill="none" stroke="#e03030" stroke-width="0.9"/>
<polygon points="565.00,72.30 568.20,72.30 566.60,74.10" fill="#1a1a1a"/>
<line x1="572.50" y1="60.80" x2="572.50" y2="77.70" stroke="#cfcfcf" stroke-width="1"/>
<rect x="575.1" y="60.5" width="1.5" height="1.1" fill="#a4a4a4"/><rect x="576.3" y="61.5" width="0.9" height="0.9" fill="#d4d4d4"/>
<rect x="575.1" y="63.2" width="1.5" height="1.1" fill="#a4a4a4"/><rect x="576.3" y="64.2" width="0.9" height="0.9" fill="#d4d4d4"/>
<rect x="575.1" y="65.9" width="1.5" height="1.1" fill="#a4a4a4"/><rect x="576.3" y="66.9" width="0.9" height="0.9" fill="#d4d4d4"/>
<rect x="575.1" y="68.7" width="1.5" height="1.1" fill="#a4a4a4"/><rect x="576.3" y="69.7" width="0.9" height="0.9" fill="#d4d4d4"/>
<rect x="575.1" y="71.4" width="1.5" height="1.1" fill="#a4a4a4"/><rect x="576.3" y="72.4" width="0.9" height="0.9" fill="#d4d4d4"/>
<rect x="575.1" y="74.1" width="1.5" height="1.1" fill="#a4a4a4"/><rect x="576.3" y="75.1" width="0.9" height="0.9" fill="#d4d4d4"/>
<rect x="575.1" y="76.8" width="1.5" height="1.1" fill="#a4a4a4"/><rect x="576.3" y="77.8" width="0.9" height="0.9" fill="#d4d4d4"/>
<path d="M586.4 61.8 H592.6 L595.6 64.8 V71.8 H586.4 Z" fill="#d9dcf8" stroke="#a3a9e4" stroke-width="0.6"/>
<rect x="588.00" y="65.00" width="6.20" height="5.00" fill="#f0a8b4"/>
<line x1="588.00" y1="66.40" x2="594.20" y2="66.40" stroke="#e06878" stroke-width="0.5"/>
<line x1="588.00" y1="68.20" x2="594.20" y2="68.20" stroke="#e06878" stroke-width="0.5"/>
<path d="M580.8 75.0 L586.0 70.4 C585.2 68.6 586.6 66.8 588.4 67.0 L587.2 68.6 L588.6 69.8 L590.2 68.6 C590.4 70.6 588.6 71.8 587.0 71.6 L582.4 76.6 C581.4 77.2 580.2 76.0 580.8 75.0 Z" fill="#f2c63c" stroke="#b48a1c" stroke-width="0.5"/>
<line x1="600.40" y1="60.80" x2="600.40" y2="77.70" stroke="#cfcfcf" stroke-width="1"/>
<line x1="605.00" y1="67.40" x2="619.60" y2="67.40" stroke="#333" stroke-width="0.8"/>
<path d="M610.0 61.8 C613.6 62.6 615.6 65.6 614.4 67.4 C612.6 70.6 608.0 70.6 605.6 75.0" fill="none" stroke="#333" stroke-width="0.8"/>
<line x1="611.80" y1="63.60" x2="618.80" y2="71.20" stroke="#e03030" stroke-width="0.9"/>
<line x1="625.80" y1="67.20" x2="636.40" y2="67.20" stroke="#333" stroke-width="0.8"/>
<line x1="636.40" y1="67.20" x2="640.40" y2="67.20" stroke="#bbb" stroke-width="0.8"/>
<line x1="634.40" y1="66.00" x2="634.40" y2="75.80" stroke="#333" stroke-width="0.8"/>
<line x1="634.40" y1="61.60" x2="634.40" y2="66.00" stroke="#bbb" stroke-width="0.8"/>
<line x1="631.30" y1="63.50" x2="638.70" y2="71.50" stroke="#e03030" stroke-width="0.9"/>
<path d="M646.0 74.0 C649.0 75.6 653.6 75.4 655.0 71.0 C656.0 68.0 654.4 63.4 658.0 62.4 L661.0 62.2" fill="none" stroke="#333" stroke-width="0.9"/>
<line x1="652.80" y1="62.90" x2="656.40" y2="67.20" stroke="#e03030" stroke-width="0.9"/>
<line x1="651.00" y1="69.60" x2="655.80" y2="74.60" stroke="#e03030" stroke-width="0.9"/>
<path d="M666.8 74.0 C671.6 75.2 676.4 72.6 676.8 68.6 L676.9 63.0" fill="none" stroke="#333" stroke-width="0.9"/>
<path d="M676.2 63.0 C677.2 65.6 677.2 68.6 675.8 71.0" fill="none" stroke="#e03030" stroke-width="0.9"/>
<line x1="679.70" y1="64.60" x2="679.70" y2="69.80" stroke="#f08a30" stroke-width="0.9"/>
<polygon points="678.50,65.00 679.70,62.80 680.90,65.00" fill="#f07030"/>
<polygon points="678.50,69.40 679.70,71.60 680.90,69.40" fill="#f07030"/>
<path d="M687.6 67.2 C690.0 64.6 692.0 63.4 696.0 63.6 C698.6 63.6 700.0 62.0 702.0 61.6" fill="none" stroke="#333" stroke-width="0.9"/>
<line x1="694.40" y1="65.60" x2="694.40" y2="68.40" stroke="#f07030" stroke-width="1.2"/>
<polygon points="693.00,68.00 695.80,68.00 694.40,70.20" fill="#f07030"/>
<path d="M687.6 75.4 C690.4 72.4 693.0 71.2 702.0 70.9" fill="none" stroke="#e03030" stroke-width="0.9"/>
<rect x="1.1" y="83.5" width="1.5" height="1.1" fill="#a4a4a4"/><rect x="2.3" y="84.5" width="0.9" height="0.9" fill="#d4d4d4"/>
<rect x="1.1" y="86.2" width="1.5" height="1.1" fill="#a4a4a4"/><rect x="2.3" y="87.2" width="0.9" height="0.9" fill="#d4d4d4"/>
<rect x="1.1" y="88.9" width="1.5" height="1.1" fill="#a4a4a4"/><rect x="2.3" y="89.9" width="0.9" height="0.9" fill="#d4d4d4"/>
<rect x="1.1" y="91.7" width="1.5" height="1.1" fill="#a4a4a4"/><rect x="2.3" y="92.7" width="0.9" height="0.9" fill="#d4d4d4"/>
<rect x="1.1" y="94.4" width="1.5" height="1.1" fill="#a4a4a4"/><rect x="2.3" y="95.4" width="0.9" height="0.9" fill="#d4d4d4"/>
<rect x="1.1" y="97.1" width="1.5" height="1.1" fill="#a4a4a4"/><rect x="2.3" y="98.1" width="0.9" height="0.9" fill="#d4d4d4"/>
<rect x="1.1" y="99.8" width="1.5" height="1.1" fill="#a4a4a4"/><rect x="2.3" y="100.8" width="0.9" height="0.9" fill="#d4d4d4"/>
<rect x="4.40" y="81.20" width="20.40" height="20.60" fill="#c3d7d3"/>
<ellipse cx="13.70" cy="89.70" rx="2.50" ry="4.30" fill="none" stroke="#8a7410" stroke-width="1.9" transform="rotate(-16.0 13.70 89.70)"/>
<ellipse cx="13.70" cy="89.70" rx="2.50" ry="4.30" fill="none" stroke="#e8d230" stroke-width="1.0" transform="rotate(-16.0 13.70 89.70)"/>
<ellipse cx="16.40" cy="94.40" rx="2.50" ry="4.30" fill="none" stroke="#8a7410" stroke-width="1.9" transform="rotate(-16.0 16.40 94.40)"/>
<ellipse cx="16.40" cy="94.40" rx="2.50" ry="4.30" fill="none" stroke="#e8d230" stroke-width="1.0" transform="rotate(-16.0 16.40 94.40)"/>
<line x1="26.40" y1="83.80" x2="26.40" y2="100.70" stroke="#dcdcdc" stroke-width="1"/>
<line x1="33.80" y1="96.70" x2="44.70" y2="86.00" stroke="#7438b4" stroke-width="1.0"/>
<circle cx="33.80" cy="96.70" r="1.20" fill="#e03434"/>
<circle cx="44.70" cy="86.00" r="1.20" fill="#e03434"/>
<line x1="57.90" y1="92.90" x2="57.90" y2="86.40" stroke="#9a9a9a" stroke-width="0.7"/>
<polygon points="57.00,87.00 57.90,85.00 58.80,87.00" fill="#9a9a9a"/>
<line x1="57.90" y1="92.90" x2="64.20" y2="90.40" stroke="#9a9a9a" stroke-width="0.7"/>
<polygon points="63.60,89.40 65.60,89.90 64.20,91.40" fill="#9a9a9a"/>
<circle cx="57.90" cy="92.90" r="0.90" fill="#8a8a8a"/>
<line x1="54.10" y1="94.20" x2="64.60" y2="96.40" stroke="#e03434" stroke-width="0.9"/>
<polygon points="63.80,95.20 66.20,96.80 63.50,97.40" fill="#e03434"/>
<circle cx="54.10" cy="94.20" r="1.20" fill="#e03434"/>
<line x1="55.10" y1="95.40" x2="64.90" y2="98.60" stroke="#7438b4" stroke-width="1.0"/>
<line x1="73.90" y1="95.00" x2="84.60" y2="84.80" stroke="#7438b4" stroke-width="1.0"/>
<circle cx="73.90" cy="95.00" r="1.20" fill="#e03434"/>
<line x1="77.10" y1="97.30" x2="87.70" y2="87.30" stroke="#e03434" stroke-width="0.8" stroke-dasharray="1.3 1.1"/>
<line x1="95.00" y1="90.80" x2="107.90" y2="94.50" stroke="#7438b4" stroke-width="1.0"/>
<circle cx="95.00" cy="90.80" r="1.20" fill="#e03434"/>
<line x1="104.50" y1="84.50" x2="100.40" y2="97.90" stroke="#e03434" stroke-width="0.8" stroke-dasharray="1.3 1.1"/>
<circle cx="101.40" cy="94.60" r="0.80" fill="#e03434"/>
<line x1="115.80" y1="92.00" x2="124.20" y2="86.60" stroke="#7438b4" stroke-width="1.0"/>
<circle cx="115.80" cy="92.00" r="1.20" fill="#e03434"/>
<circle cx="126.10" cy="89.10" r="2.90" fill="none" stroke="#e03434" stroke-width="0.8" stroke-dasharray="1.3 1.0"/>
<circle cx="138.60" cy="94.20" r="3.50" fill="none" stroke="#e03434" stroke-width="0.8" stroke-dasharray="1.3 1.0"/>
<circle cx="146.80" cy="89.10" r="3.10" fill="none" stroke="#e03434" stroke-width="0.8" stroke-dasharray="1.3 1.0"/>
<line x1="136.80" y1="91.00" x2="145.50" y2="86.00" stroke="#7438b4" stroke-width="1.0"/>
<circle cx="160.60" cy="91.00" r="3.60" fill="none" stroke="#e03434" stroke-width="0.8" stroke-dasharray="1.3 1.0"/>
<path d="M164.3 91.7 C166.4 93.2 169.6 91.6 170.6 88.4" fill="none" stroke="#e03434" stroke-width="0.8"/>
<line x1="159.90" y1="96.70" x2="164.30" y2="91.70" stroke="#7438b4" stroke-width="1.1"/>
<circle cx="159.90" cy="96.70" r="1.20" fill="#e03434"/>
<path d="M176.8 96.7 C177.6 93.0 179.6 89.6 181.4 89.1 C183.0 90.6 184.4 94.6 185.8 95.4 C187.6 95.6 190.0 92.6 191.4 90.0" fill="none" stroke="#e03434" stroke-width="0.8" stroke-dasharray="1.3 1.0"/>
<line x1="183.00" y1="90.80" x2="187.70" y2="86.30" stroke="#7438b4" stroke-width="1.1"/>
<circle cx="184.60" cy="85.80" r="1.00" fill="#e03434"/>
<circle cx="187.90" cy="86.30" r="1.00" fill="#e03434"/>
<polygon points="198.50,86.20 210.40,85.20 210.40,97.40 198.50,98.60" fill="url(#bfg)" stroke="#5a6a8a" stroke-width="0.5" stroke-linejoin="round"/>
<line x1="201.40" y1="84.20" x2="201.40" y2="99.20" stroke="#222" stroke-width="0.9"/>
<line x1="198.00" y1="89.60" x2="211.00" y2="88.60" stroke="#222" stroke-width="0.8"/>
<line x1="198.00" y1="94.60" x2="211.40" y2="93.80" stroke="#222" stroke-width="0.8"/>
<circle cx="201.40" cy="84.20" r="0.90" fill="#e03434"/>
<circle cx="201.40" cy="99.20" r="0.90" fill="#e03434"/>
<circle cx="197.80" cy="90.00" r="0.90" fill="#e03434"/>
<circle cx="197.80" cy="94.60" r="0.90" fill="#e03434"/>
<circle cx="209.80" cy="88.40" r="0.90" fill="#e03434"/>
<circle cx="211.60" cy="93.60" r="0.90" fill="#e03434"/>
<line x1="216.10" y1="83.80" x2="216.10" y2="100.70" stroke="#cfcfcf" stroke-width="1"/>
<path d="M223.8 88.8 C228.6 89.0 232.4 92.4 233.0 97.0" fill="none" stroke="#7438b4" stroke-width="1.0"/>
<circle cx="223.80" cy="88.80" r="1.20" fill="#e03434"/>
<circle cx="229.90" cy="91.00" r="1.20" fill="#e03434"/>
<circle cx="233.00" cy="97.00" r="1.20" fill="#e03434"/>
<path d="M245.3 88.5 C249.6 89.6 252.6 92.6 253.5 97.0" fill="none" stroke="#7438b4" stroke-width="1.0"/>
<circle cx="245.30" cy="88.50" r="1.20" fill="#e03434"/>
<circle cx="253.50" cy="97.00" r="1.20" fill="#e03434"/>
<line x1="244.60" y1="85.60" x2="248.60" y2="87.40" stroke="#e03434" stroke-width="0.8" stroke-dasharray="1.3 1.1"/>
<line x1="252.20" y1="95.60" x2="256.00" y2="95.80" stroke="#e03434" stroke-width="0.8" stroke-dasharray="1.3 1.1"/>
<circle cx="250.80" cy="92.00" r="0.70" fill="#e03434"/>
<line x1="264.30" y1="85.40" x2="276.80" y2="85.40" stroke="#e03434" stroke-width="0.8" stroke-dasharray="1.3 1.1"/>
<line x1="264.30" y1="97.30" x2="276.80" y2="97.30" stroke="#e03434" stroke-width="0.8" stroke-dasharray="1.3 1.1"/>
<line x1="276.50" y1="84.00" x2="276.50" y2="98.80" stroke="#e03434" stroke-width="0.8" stroke-dasharray="1.3 1.1"/>
<path d="M270.6 85.4 C278.4 86.4 278.4 96.4 270.6 97.3" fill="none" stroke="#7438b4" stroke-width="1.0"/>
<circle cx="276.50" cy="85.40" r="0.80" fill="#e03434"/>
<circle cx="276.50" cy="97.30" r="0.80" fill="#e03434"/>
<line x1="285.00" y1="85.40" x2="298.00" y2="85.40" stroke="#e03434" stroke-width="0.8" stroke-dasharray="1.3 1.1"/>
<line x1="296.20" y1="84.00" x2="296.20" y2="98.60" stroke="#e03434" stroke-width="0.8" stroke-dasharray="1.3 1.1"/>
<path d="M291.8 85.6 C294.6 86.4 296.0 88.0 296.2 90.6" fill="none" stroke="#7438b4" stroke-width="1.0"/>
<line x1="290.80" y1="92.00" x2="294.30" y2="88.80" stroke="#e03434" stroke-width="1.0"/>
<circle cx="290.80" cy="92.00" r="1.10" fill="#e03434"/>
<circle cx="294.30" cy="88.80" r="0.90" fill="#e03434"/>
<line x1="303.10" y1="83.80" x2="303.10" y2="100.70" stroke="#cfcfcf" stroke-width="1"/>
<circle cx="315.40" cy="91.30" r="6.20" fill="none" stroke="#7438b4" stroke-width="0.9"/>
<circle cx="315.40" cy="91.30" r="0.60" fill="#7438b4"/>
<circle cx="313.80" cy="85.30" r="1.00" fill="#e03434"/>
<circle cx="319.40" cy="86.50" r="1.00" fill="#e03434"/>
<circle cx="321.40" cy="92.00" r="1.00" fill="#e03434"/>
<circle cx="335.30" cy="92.50" r="5.90" fill="none" stroke="#7438b4" stroke-width="0.9"/>
<circle cx="335.30" cy="92.50" r="0.60" fill="#7438b4"/>
<circle cx="334.10" cy="86.70" r="1.00" fill="#e03434"/>
<circle cx="341.00" cy="94.20" r="1.00" fill="#e03434"/>
<line x1="335.00" y1="83.50" x2="344.50" y2="92.90" stroke="#e03434" stroke-width="0.8" stroke-dasharray="1.3 1.1"/>
<circle cx="356.30" cy="91.60" r="5.90" fill="none" stroke="#7438b4" stroke-width="0.9"/>
<circle cx="356.30" cy="91.60" r="0.60" fill="#7438b4"/>
<rect x="350.6" y="85.0" width="12.0" height="13.0" fill="none" stroke="#e03434" stroke-width="0.7" stroke-dasharray="1.3 1.1"/>
<circle cx="377.30" cy="91.60" r="5.90" fill="none" stroke="#7438b4" stroke-width="0.9"/>
<line x1="377.30" y1="91.60" x2="381.30" y2="87.50" stroke="#e03434" stroke-width="1.0"/>
<circle cx="377.30" cy="91.60" r="0.90" fill="#e03434"/>
<circle cx="381.30" cy="87.50" r="0.90" fill="#e03434"/>
<line x1="383.70" y1="83.60" x2="383.70" y2="99.00" stroke="#e03434" stroke-width="0.8" stroke-dasharray="1.3 1.1"/>
<line x1="390.20" y1="83.80" x2="390.20" y2="100.70" stroke="#cfcfcf" stroke-width="1"/>
<circle cx="402.10" cy="90.90" r="6.10" fill="none" stroke="#7438b4" stroke-width="0.9"/>
<circle cx="402.10" cy="90.90" r="1.00" fill="#e03434"/>
<circle cx="408.10" cy="90.90" r="1.00" fill="#e03434"/>
<circle cx="422.60" cy="91.60" r="5.90" fill="none" stroke="#7438b4" stroke-width="0.9"/>
<line x1="422.60" y1="91.60" x2="426.40" y2="88.20" stroke="#e03434" stroke-width="1.1"/>
<circle cx="422.60" cy="91.60" r="0.90" fill="#e03434"/>
<circle cx="442.80" cy="92.10" r="5.80" fill="none" stroke="#7438b4" stroke-width="0.9"/>
<circle cx="442.80" cy="92.10" r="1.00" fill="#e03434"/>
<line x1="443.10" y1="84.10" x2="450.00" y2="90.40" stroke="#e03434" stroke-width="0.8" stroke-dasharray="1.3 1.1"/>
<circle cx="446.80" cy="87.60" r="0.70" fill="#e03434"/>
<polygon points="456.60,95.00 459.80,95.00 458.20,96.80" fill="#1a1a1a"/>
<line x1="463.70" y1="83.80" x2="463.70" y2="100.70" stroke="#cfcfcf" stroke-width="1"/>
<rect x="466.5" y="83.5" width="1.5" height="1.1" fill="#a4a4a4"/><rect x="467.7" y="84.5" width="0.9" height="0.9" fill="#d4d4d4"/>
<rect x="466.5" y="86.2" width="1.5" height="1.1" fill="#a4a4a4"/><rect x="467.7" y="87.2" width="0.9" height="0.9" fill="#d4d4d4"/>
<rect x="466.5" y="88.9" width="1.5" height="1.1" fill="#a4a4a4"/><rect x="467.7" y="89.9" width="0.9" height="0.9" fill="#d4d4d4"/>
<rect x="466.5" y="91.7" width="1.5" height="1.1" fill="#a4a4a4"/><rect x="467.7" y="92.7" width="0.9" height="0.9" fill="#d4d4d4"/>
<rect x="466.5" y="94.4" width="1.5" height="1.1" fill="#a4a4a4"/><rect x="467.7" y="95.4" width="0.9" height="0.9" fill="#d4d4d4"/>
<rect x="466.5" y="97.1" width="1.5" height="1.1" fill="#a4a4a4"/><rect x="467.7" y="98.1" width="0.9" height="0.9" fill="#d4d4d4"/>
<rect x="466.5" y="99.8" width="1.5" height="1.1" fill="#a4a4a4"/><rect x="467.7" y="100.8" width="0.9" height="0.9" fill="#d4d4d4"/>
<polygon points="472.20,88.00 479.00,84.00 486.60,86.60 486.60,95.60 479.40,99.40 472.20,96.40" fill="#5f88dc" stroke="#3c5eb0" stroke-width="0.5" stroke-linejoin="round"/>
<polygon points="472.20,88.00 479.00,84.00 486.60,86.60 479.40,90.60" fill="#a9c0f2"/>
<polygon points="472.20,88.00 479.40,90.60 479.40,99.40 472.20,96.40" fill="#8aaced"/>
<polygon points="479.40,90.60 486.60,86.60 486.60,95.60 479.40,99.40" fill="#5f88dc"/>
<rect x="477.40" y="92.00" width="9.60" height="6.60" fill="#e8eefc" opacity="0.75"/>
<line x1="478.00" y1="93.00" x2="478.00" y2="98.40" stroke="#222" stroke-width="0.8"/>
<line x1="486.40" y1="93.00" x2="486.40" y2="98.40" stroke="#222" stroke-width="0.8"/>
<line x1="478.00" y1="96.20" x2="486.40" y2="96.20" stroke="#222" stroke-width="0.7"/>
<circle cx="482.20" cy="93.60" r="1.20" fill="#fff" stroke="#222" stroke-width="0.6"/>
<line x1="491.50" y1="83.80" x2="491.50" y2="100.70" stroke="#cfcfcf" stroke-width="1"/>
<rect x="500.20" y="84.60" width="7.00" height="5.40" fill="#fafafa" stroke="#222" stroke-width="0.9"/>
<rect x="502.00" y="92.80" width="8.00" height="5.80" fill="#fafafa" stroke="#222" stroke-width="0.9"/>
<rect x="497.00" y="84.20" width="3.20" height="3.80" fill="#f2cc3c" stroke="#a88414" stroke-width="0.5"/>
<path d="M497.8 84.4 C497.8 82.8 499.6 82.8 499.6 84.4" fill="none" stroke="#a88414" stroke-width="0.6"/>
<path d="M498.6 89.4 C497.0 92.6 498.6 95.6 501.6 95.8" fill="none" stroke="#f08a30" stroke-width="1.2"/>
<polygon points="500.80,94.20 503.00,95.90 500.60,97.40" fill="#f07030"/>
<rect x="505.60" y="87.40" width="1.60" height="1.60" fill="#f2cc3c"/>
<rect x="508.00" y="93.60" width="1.60" height="1.60" fill="#f2cc3c"/>
<circle cx="507.60" cy="84.80" r="0.70" fill="#e03434"/>
<circle cx="510.20" cy="92.80" r="0.70" fill="#e03434"/>
<line x1="518.30" y1="84.70" x2="526.70" y2="92.10" stroke="#222" stroke-width="1.0"/>
<line x1="526.70" y1="84.70" x2="518.30" y2="92.10" stroke="#222" stroke-width="1.0"/>
<line x1="516.50" y1="94.20" x2="527.80" y2="94.20" stroke="#222" stroke-width="0.9"/>
<line x1="528.60" y1="83.80" x2="528.60" y2="93.00" stroke="#222" stroke-width="0.9"/>
<line x1="527.60" y1="84.00" x2="530.00" y2="84.00" stroke="#222" stroke-width="0.7"/>
<line x1="527.60" y1="92.60" x2="530.00" y2="92.60" stroke="#222" stroke-width="0.7"/>
<path d="M521.4 95.8 L523.4 98.2 M523.4 95.8 L521.4 98.2" fill="none" stroke="#e03434" stroke-width="0.7"/>
<path d="M530.4 87.0 L532.2 89.4 M532.2 87.0 L530.4 89.4" fill="none" stroke="#e03434" stroke-width="0.7"/>
<ellipse cx="545.20" cy="96.60" rx="7.00" ry="2.60" fill="#c9d6f8" stroke="#4f68d0" stroke-width="0.7"/>
<polygon points="545.20,83.40 550.80,96.20 545.40,97.60 539.80,96.00" fill="url(#cone)" stroke="#4a4a4a" stroke-width="0.6" stroke-linejoin="round"/>
<line x1="545.20" y1="83.40" x2="545.40" y2="97.60" stroke="#c89a3a" stroke-width="0.5"/>
<line x1="549.00" y1="84.40" x2="552.40" y2="84.00" stroke="#3a58e0" stroke-width="0.9"/>
<line x1="549.60" y1="86.40" x2="552.60" y2="86.20" stroke="#3a58e0" stroke-width="0.9"/>
<polygon points="558.40,92.00 565.00,94.40 572.00,90.60 572.00,94.60 565.00,99.40 558.40,96.60" fill="#a4b8f2" stroke="#6f84dc" stroke-width="0.5" stroke-linejoin="round"/>
<polygon points="558.40,92.00 565.00,94.40 565.00,99.40 558.40,96.60" fill="#8aa2ec"/>
<polygon points="560.60,84.20 565.60,83.60 566.40,93.20 561.20,93.60" fill="#7a94e8" stroke="#4f68d0" stroke-width="0.5" stroke-linejoin="round"/>
<rect x="562.40" y="84.60" width="1.60" height="7.60" fill="#e6ecfc"/>
<line x1="565.40" y1="92.60" x2="573.20" y2="86.60" stroke="#e03434" stroke-width="0.8" stroke-dasharray="1.3 1.1"/>
<polygon points="571.60,86.00 574.00,86.00 573.00,88.20" fill="#e03434"/>
<line x1="566.60" y1="88.00" x2="573.60" y2="86.60" stroke="#e03434" stroke-width="0.7"/>
<polygon points="578.80,94.70 582.00,94.70 580.40,96.50" fill="#1a1a1a"/>
<polygon points="83.00,112.55 87.00,112.55 85.00,114.85" fill="#1a1a1a"/>
<polygon points="180.40,112.55 184.40,112.55 182.40,114.85" fill="#1a1a1a"/>
<polygon points="194.20,111.60 198.00,108.20 201.40,110.00 201.60,116.60 197.60,118.60 194.40,116.80" fill="none" stroke="#c4c4c4" stroke-width="0.8" stroke-linejoin="round"/>
<line x1="197.80" y1="108.40" x2="197.80" y2="118.40" stroke="#c4c4c4" stroke-width="0.8"/>
<line x1="194.40" y1="114.20" x2="201.40" y2="113.00" stroke="#c4c4c4" stroke-width="0.8"/>
<circle cx="203.00" cy="112.60" r="2.40" fill="none" stroke="#c4c4c4" stroke-width="0.8"/>
<line x1="208.40" y1="105.60" x2="208.40" y2="120.60" stroke="#cfcfcf" stroke-width="1"/>
<path d="M214.0 110.6 C214.6 108.4 218.6 108.4 219.0 110.6 L217.4 112.2" fill="none" stroke="#c4c4c4" stroke-width="1.0"/>
<polygon points="219.60,113.60 224.00,113.60 222.40,116.00 222.40,118.60 221.20,118.60 221.20,116.00" fill="none" stroke="#c4c4c4" stroke-width="0.8" stroke-linejoin="round"/>
<rect x="226.60" y="108.20" width="10.40" height="10.40" fill="#fff" stroke="#e04444" stroke-width="0.9"/>
<circle cx="230.40" cy="111.60" r="1.60" fill="#d86a5a" stroke="#7a8ad0" stroke-width="0.5"/>
<polygon points="231.40,113.40 236.20,113.40 234.40,115.60 234.40,117.60 233.20,117.60 233.20,115.60" fill="#f2b82c" stroke="#c8901c" stroke-width="0.4" stroke-linejoin="round"/>
<polygon points="242.15,112.30 245.25,112.30 243.70,114.10" fill="#1a1a1a"/>
<path d="M252.0 110.8 C252.6 108.6 256.4 108.6 256.8 110.6" fill="none" stroke="#c4c4c4" stroke-width="1.0"/>
<polygon points="255.80,109.40 258.20,110.80 255.60,111.80" fill="#c4c4c4"/>
<line x1="255.40" y1="112.00" x2="255.40" y2="119.00" stroke="#c4c4c4" stroke-width="0.8"/>
<line x1="252.00" y1="115.60" x2="259.00" y2="115.60" stroke="#c4c4c4" stroke-width="0.8"/>
<circle cx="255.40" cy="115.60" r="1.80" fill="none" stroke="#c4c4c4" stroke-width="0.7"/>
<path d="M265.4 110.4 C266.0 108.4 270.0 108.4 270.4 110.6 L268.6 112.0" fill="none" stroke="#c4c4c4" stroke-width="1.0"/>
<circle cx="267.60" cy="110.60" r="1.30" fill="none" stroke="#c4c4c4" stroke-width="0.7"/>
<path d="M271.6 112.0 V118.8 M274.4 113.4 V118.8 M271.6 115.6 H274.4" fill="none" stroke="#c4c4c4" stroke-width="0.8"/>
<line x1="279.70" y1="105.60" x2="279.70" y2="120.60" stroke="#cfcfcf" stroke-width="1"/>
<rect x="284.6" y="109.4" width="9.6" height="8.6" fill="none" stroke="#222" stroke-width="0.9" stroke-dasharray="1.8 1.3"/>
<circle cx="284.80" cy="109.40" r="0.90" fill="#e03434"/>
<circle cx="294.00" cy="118.00" r="0.90" fill="#e03434"/>
<polygon points="299.85,111.90 302.95,111.90 301.40,113.70" fill="#1a1a1a"/>
<line x1="306.50" y1="105.60" x2="306.50" y2="120.60" stroke="#cfcfcf" stroke-width="1"/>
<ellipse cx="316.40" cy="115.20" rx="5.40" ry="2.80" fill="#9c9c9c" stroke="#6c6c6c" stroke-width="0.5" transform="rotate(-12.0 316.40 115.20)"/>
<ellipse cx="316.60" cy="113.00" rx="5.40" ry="3.00" fill="#e6e6e6" stroke="#8c8c8c" stroke-width="0.5" transform="rotate(-12.0 316.60 113.00)"/>
<ellipse cx="317.00" cy="112.80" rx="2.60" ry="1.40" fill="#b4b4b4" transform="rotate(-12.0 317.00 112.80)"/>
<line x1="312.60" y1="110.60" x2="320.60" y2="115.00" stroke="#e03434" stroke-width="0.7"/>
<polygon points="326.20,111.00 331.60,108.60 337.00,110.40 337.00,116.40 331.80,118.80 326.20,116.60" fill="#4a8fe6" stroke="#3a70c8" stroke-width="0.4" stroke-linejoin="round"/>
<polygon points="326.20,111.00 331.60,108.60 337.00,110.40 331.80,112.80" fill="#eef4fe"/>
<polygon points="326.20,111.00 331.80,112.80 331.80,118.80 326.20,116.60" fill="#6fa8f0"/>
<line x1="328.00" y1="110.40" x2="335.40" y2="111.60" stroke="#e03434" stroke-width="0.6"/>
<line x1="331.80" y1="112.80" x2="331.80" y2="118.80" stroke="#d8e6fb" stroke-width="0.5"/>
<line x1="341.50" y1="105.60" x2="341.50" y2="120.60" stroke="#cfcfcf" stroke-width="1"/>
<rect x="344.00" y="105.60" width="46.20" height="14.80" fill="#c3d7d3"/>
<line x1="359.50" y1="106.00" x2="359.50" y2="120.00" stroke="#dbe8e5" stroke-width="0.8"/>
<line x1="374.60" y1="106.00" x2="374.60" y2="120.00" stroke="#dbe8e5" stroke-width="0.8"/>
<polygon points="346.40,109.60 349.00,111.40 346.40,113.20" fill="#2fb84a"/>
<polygon points="346.40,114.80 349.00,116.60 346.40,118.40" fill="#e03434"/>
<circle cx="352.60" cy="111.20" r="1.00" fill="#1a1a1a"/>
<circle cx="352.60" cy="117.20" r="1.00" fill="#1a1a1a"/>
<circle cx="349.60" cy="114.20" r="1.00" fill="#1a1a1a"/>
<circle cx="355.60" cy="114.20" r="1.00" fill="#1a1a1a"/>
<circle cx="350.50" cy="112.10" r="0.60" fill="#555"/>
<circle cx="354.70" cy="112.10" r="0.60" fill="#555"/>
<circle cx="350.50" cy="116.30" r="0.60" fill="#555"/>
<circle cx="354.70" cy="116.30" r="0.60" fill="#555"/>
<circle cx="352.60" cy="114.20" r="1.50" fill="#f4d41c" stroke="#8a7a10" stroke-width="0.4"/>
<line x1="363.30" y1="117.90" x2="370.80" y2="110.00" stroke="#222" stroke-width="0.9"/>
<circle cx="370.60" cy="110.20" r="1.00" fill="#e03434"/>
<line x1="378.40" y1="118.40" x2="387.80" y2="109.60" stroke="#222" stroke-width="0.9"/>
<circle cx="382.80" cy="114.20" r="1.00" fill="#e03434"/>
<path d="M392.8 109.6 C396.4 109.2 396.4 111.0 397.0 113.6 C397.6 116.6 398.4 118.0 401.6 117.8" fill="none" stroke="#222" stroke-width="0.9"/>
<circle cx="397.10" cy="113.40" r="1.00" fill="#e03434"/>
<rect x="404.80" y="105.60" width="15.20" height="14.80" fill="#c3d7d3"/>
<path d="M408.6 113.6 L411.4 109.8 L414.8 117.4 L418.2 111.6" fill="none" stroke="#7438b4" stroke-width="1.1"/>
<circle cx="408.60" cy="113.60" r="0.90" fill="#e03434"/>
<circle cx="411.40" cy="109.80" r="0.90" fill="#e03434"/>
<circle cx="414.80" cy="117.40" r="0.90" fill="#e03434"/>
<circle cx="418.20" cy="111.60" r="0.90" fill="#e03434"/>
<path d="M423.2 114.9 C424.6 109.2 430.8 109.2 432.4 114.9" fill="none" stroke="#222" stroke-width="0.9"/>
<line x1="427.70" y1="109.80" x2="427.70" y2="118.40" stroke="#222" stroke-width="0.9"/>
<rect x="436.30" y="105.60" width="14.60" height="14.80" fill="#c3d7d3"/>
<circle cx="444.30" cy="114.10" r="4.10" fill="none" stroke="#1a1a1a" stroke-width="1.2"/>
<circle cx="444.30" cy="114.10" r="1.00" fill="#e03434"/>
<circle cx="458.80" cy="112.90" r="4.10" fill="none" stroke="#444" stroke-width="0.8"/>
<circle cx="458.80" cy="108.80" r="0.90" fill="#e03434"/>
<circle cx="458.80" cy="117.00" r="0.90" fill="#e03434"/>
<circle cx="454.70" cy="112.90" r="0.90" fill="#e03434"/>
<circle cx="462.90" cy="112.90" r="0.90" fill="#e03434"/>
<rect x="466.40" y="105.60" width="31.40" height="14.80" fill="#c3d7d3"/>
<line x1="482.20" y1="106.00" x2="482.20" y2="120.00" stroke="#dbe8e5" stroke-width="0.8"/>
<line x1="470.80" y1="114.10" x2="478.00" y2="114.10" stroke="#1a1a1a" stroke-width="1.0"/>
<line x1="474.40" y1="110.40" x2="474.40" y2="117.80" stroke="#1a1a1a" stroke-width="1.0"/>
<circle cx="474.40" cy="114.10" r="0.90" fill="#e03434"/>
<line x1="485.90" y1="118.60" x2="494.50" y2="109.70" stroke="#1a1a1a" stroke-width="1.0"/>
<circle cx="487.60" cy="116.90" r="1.00" fill="#e03434"/>
<path d="M499.4 112.6 C500.6 109.0 505.6 108.0 509.6 110.6 L507.0 112.8 C509.0 114.6 508.6 117.4 506.0 118.4 C502.6 118.4 499.6 116.0 499.4 112.6 Z" fill="#6f9eea" stroke="#4a78d0" stroke-width="0.5"/>
<path d="M501.4 112.4 C502.4 110.4 505.0 110.0 507.0 111.4 L505.2 113.0 C506.4 114.4 506.0 116.0 504.6 116.8 C502.6 116.4 501.4 114.6 501.4 112.4 Z" fill="#f2f6fe"/>
<circle cx="506.60" cy="112.40" r="0.90" fill="#e03434"/>
<line x1="514.50" y1="105.60" x2="514.50" y2="120.60" stroke="#cfcfcf" stroke-width="1"/>
<polygon points="520.20,110.60 523.00,109.20 526.80,110.80 526.80,116.40 524.00,118.00 520.20,116.20" fill="#ecdcdc" stroke="#444" stroke-width="0.6" stroke-linejoin="round"/>
<line x1="520.20" y1="112.40" x2="524.00" y2="114.20" stroke="#444" stroke-width="0.5"/>
<line x1="520.20" y1="114.20" x2="524.00" y2="116.00" stroke="#444" stroke-width="0.5"/>
<line x1="524.00" y1="112.40" x2="524.00" y2="118.00" stroke="#444" stroke-width="0.5"/>
<line x1="520.20" y1="110.60" x2="524.00" y2="112.40" stroke="#444" stroke-width="0.5"/>
<line x1="524.00" y1="112.40" x2="526.80" y2="110.80" stroke="#444" stroke-width="0.5"/>
<line x1="521.60" y1="111.20" x2="521.60" y2="116.80" stroke="#444" stroke-width="0.4"/>
<line x1="522.80" y1="111.80" x2="522.80" y2="117.40" stroke="#444" stroke-width="0.4"/>
<line x1="524.00" y1="114.20" x2="526.80" y2="112.60" stroke="#444" stroke-width="0.4"/>
<line x1="524.00" y1="116.00" x2="526.80" y2="114.40" stroke="#444" stroke-width="0.4"/>
<line x1="525.40" y1="111.60" x2="525.40" y2="117.20" stroke="#444" stroke-width="0.4"/>
<line x1="54.90" y1="124.00" x2="54.90" y2="482.00" stroke="#e2e2e2" stroke-width="1"/>
<line x1="24.40" y1="124.00" x2="24.40" y2="482.00" stroke="#f6f6f6" stroke-width="1"/>
<rect x="26.4" y="126.4" width="1.1" height="1.5" fill="#a4a4a4"/><rect x="27.4" y="127.6" width="0.9" height="0.9" fill="#d4d4d4"/>
<rect x="29.1" y="126.4" width="1.1" height="1.5" fill="#a4a4a4"/><rect x="30.1" y="127.6" width="0.9" height="0.9" fill="#d4d4d4"/>
<rect x="31.8" y="126.4" width="1.1" height="1.5" fill="#a4a4a4"/><rect x="32.8" y="127.6" width="0.9" height="0.9" fill="#d4d4d4"/>
<rect x="34.6" y="126.4" width="1.1" height="1.5" fill="#a4a4a4"/><rect x="35.6" y="127.6" width="0.9" height="0.9" fill="#d4d4d4"/>
<rect x="37.3" y="126.4" width="1.1" height="1.5" fill="#a4a4a4"/><rect x="38.3" y="127.6" width="0.9" height="0.9" fill="#d4d4d4"/>
<rect x="40.0" y="126.4" width="1.1" height="1.5" fill="#a4a4a4"/><rect x="41.0" y="127.6" width="0.9" height="0.9" fill="#d4d4d4"/>
<rect x="42.7" y="126.4" width="1.1" height="1.5" fill="#a4a4a4"/><rect x="43.7" y="127.6" width="0.9" height="0.9" fill="#d4d4d4"/>
<rect x="45.4" y="126.4" width="1.1" height="1.5" fill="#a4a4a4"/><rect x="46.4" y="127.6" width="0.9" height="0.9" fill="#d4d4d4"/>
<rect x="48.2" y="126.4" width="1.1" height="1.5" fill="#a4a4a4"/><rect x="49.2" y="127.6" width="0.9" height="0.9" fill="#d4d4d4"/>
<rect x="50.9" y="126.4" width="1.1" height="1.5" fill="#a4a4a4"/><rect x="51.9" y="127.6" width="0.9" height="0.9" fill="#d4d4d4"/>
<rect x="57.6" y="126.4" width="1.1" height="1.5" fill="#a4a4a4"/><rect x="58.6" y="127.6" width="0.9" height="0.9" fill="#d4d4d4"/>
<rect x="60.3" y="126.4" width="1.1" height="1.5" fill="#a4a4a4"/><rect x="61.3" y="127.6" width="0.9" height="0.9" fill="#d4d4d4"/>
<rect x="63.0" y="126.4" width="1.1" height="1.5" fill="#a4a4a4"/><rect x="64.0" y="127.6" width="0.9" height="0.9" fill="#d4d4d4"/>
<rect x="65.8" y="126.4" width="1.1" height="1.5" fill="#a4a4a4"/><rect x="66.8" y="127.6" width="0.9" height="0.9" fill="#d4d4d4"/>
<rect x="68.5" y="126.4" width="1.1" height="1.5" fill="#a4a4a4"/><rect x="69.5" y="127.6" width="0.9" height="0.9" fill="#d4d4d4"/>
<rect x="71.2" y="126.4" width="1.1" height="1.5" fill="#a4a4a4"/><rect x="72.2" y="127.6" width="0.9" height="0.9" fill="#d4d4d4"/>
<rect x="73.9" y="126.4" width="1.1" height="1.5" fill="#a4a4a4"/><rect x="74.9" y="127.6" width="0.9" height="0.9" fill="#d4d4d4"/>
<rect x="76.6" y="126.4" width="1.1" height="1.5" fill="#a4a4a4"/><rect x="77.6" y="127.6" width="0.9" height="0.9" fill="#d4d4d4"/>
<rect x="79.4" y="126.4" width="1.1" height="1.5" fill="#a4a4a4"/><rect x="80.4" y="127.6" width="0.9" height="0.9" fill="#d4d4d4"/>
<circle cx="9.30" cy="132.70" r="2.90" fill="none" stroke="#222" stroke-width="1.0"/>
<line x1="12.50" y1="132.70" x2="13.60" y2="132.70" stroke="#222" stroke-width="0.9"/>
<line x1="11.56" y1="134.96" x2="12.34" y2="135.74" stroke="#222" stroke-width="0.9"/>
<line x1="9.30" y1="135.90" x2="9.30" y2="137.00" stroke="#222" stroke-width="0.9"/>
<line x1="7.04" y1="134.96" x2="6.26" y2="135.74" stroke="#222" stroke-width="0.9"/>
<line x1="6.10" y1="132.70" x2="5.00" y2="132.70" stroke="#222" stroke-width="0.9"/>
<line x1="7.04" y1="130.44" x2="6.26" y2="129.66" stroke="#222" stroke-width="0.9"/>
<line x1="9.30" y1="129.50" x2="9.30" y2="128.40" stroke="#222" stroke-width="0.9"/>
<line x1="11.56" y1="130.44" x2="12.34" y2="129.66" stroke="#222" stroke-width="0.9"/>
<polygon points="4.40,159.78 6.70,158.40 9.00,159.78 9.00,162.08 6.70,163.46 4.40,162.08" fill="#f2c21c" stroke="#c89210" stroke-width="0.4" stroke-linejoin="round"/>
<polygon points="4.40,159.78 6.70,158.40 9.00,159.78 6.70,161.16" fill="#fbe676"/>
<polygon points="6.70,161.16 9.00,159.78 9.00,162.08 6.70,163.46" fill="#e0a414"/>
<polygon points="4.60,163.38 6.90,162.00 9.20,163.38 9.20,165.68 6.90,167.06 4.60,165.68" fill="#f2c21c" stroke="#c89210" stroke-width="0.4" stroke-linejoin="round"/>
<polygon points="4.60,163.38 6.90,162.00 9.20,163.38 6.90,164.76" fill="#fbe676"/>
<polygon points="6.90,164.76 9.20,163.38 9.20,165.68 6.90,167.06" fill="#e0a414"/>
<polygon points="8.40,163.12 10.60,161.80 12.80,163.12 12.80,165.32 10.60,166.64 8.40,165.32" fill="#f2c21c" stroke="#c89210" stroke-width="0.4" stroke-linejoin="round"/>
<polygon points="8.40,163.12 10.60,161.80 12.80,163.12 10.60,164.44" fill="#fbe676"/>
<polygon points="10.60,164.44 12.80,163.12 12.80,165.32 10.60,166.64" fill="#e0a414"/>
<line x1="12.60" y1="166.40" x2="18.80" y2="166.40" stroke="#111" stroke-width="1.0"/>
<line x1="6.20" y1="166.80" x2="6.20" y2="174.00" stroke="#2a32d8" stroke-width="1.0"/>
<line x1="6.20" y1="170.20" x2="10.80" y2="170.20" stroke="#2a32d8" stroke-width="1.0"/>
<polygon points="11.80,169.84 14.20,168.40 16.60,169.84 16.60,172.24 14.20,173.68 11.80,172.24" fill="#f2c21c" stroke="#c89210" stroke-width="0.4" stroke-linejoin="round"/>
<polygon points="11.80,169.84 14.20,168.40 16.60,169.84 14.20,171.28" fill="#fbe676"/>
<polygon points="14.20,171.28 16.60,169.84 16.60,172.24 14.20,173.68" fill="#e0a414"/>
<polygon points="6.00,186.80 10.60,190.00 6.00,193.20" fill="#1030e0"/>
<polygon points="15.60,186.80 11.20,190.00 15.60,193.20" fill="#1030e0"/>
<line x1="10.90" y1="187.20" x2="10.90" y2="201.40" stroke="#111" stroke-width="0.7" stroke-dasharray="1.4 1"/>
<rect x="4.60" y="195.80" width="4.60" height="5.20" fill="#f8ec1c" stroke="#e09a10" stroke-width="0.7"/>
<polygon points="12.20,195.60 18.00,201.20 12.20,201.20" fill="#e01818" stroke="#a01010" stroke-width="0.4" stroke-linejoin="round"/>
<path d="M4.4 216.6 V220.0 C4.4 221.8 10.6 221.8 10.6 220.0 V216.6 Z" fill="#c84ab4" stroke="#8a2a7a" stroke-width="0.5"/>
<ellipse cx="7.50" cy="216.60" rx="3.10" ry="1.30" fill="#f0a8e4" stroke="#8a2a7a" stroke-width="0.5"/>
<line x1="11.80" y1="220.20" x2="18.00" y2="220.20" stroke="#111" stroke-width="1.0"/>
<line x1="6.50" y1="221.80" x2="6.50" y2="229.80" stroke="#2a32d8" stroke-width="1.0"/>
<line x1="6.50" y1="226.70" x2="10.80" y2="226.70" stroke="#2a32d8" stroke-width="1.0"/>
<circle cx="14.30" cy="226.70" r="2.50" fill="#fff" stroke="#b030a0" stroke-width="1.0"/>
<circle cx="14.30" cy="226.70" r="0.90" fill="#b030a0"/>
<polygon points="3.20,247.00 7.20,247.00 7.20,257.60 3.20,257.60" fill="#f08a1c" stroke="#c0640c" stroke-width="0.4" stroke-linejoin="round"/>
<polygon points="3.20,247.00 5.40,244.60 9.40,244.60 7.20,247.00" fill="#fafafa" stroke="#c0640c" stroke-width="0.4" stroke-linejoin="round"/>
<polygon points="7.20,247.00 11.20,247.00 11.20,257.60 7.20,257.60" fill="#2cc02c" stroke="#188a18" stroke-width="0.4" stroke-linejoin="round"/>
<polygon points="7.20,247.00 9.40,244.60 13.40,244.60 11.20,247.00" fill="#fafafa" stroke="#188a18" stroke-width="0.4" stroke-linejoin="round"/>
<polygon points="11.20,246.00 15.40,246.00 18.40,243.80 18.40,254.60 15.40,257.60 11.20,257.60" fill="#2a6ee0" stroke="#1a4ab0" stroke-width="0.4" stroke-linejoin="round"/>
<polygon points="11.20,246.00 13.60,243.60 18.40,243.80 15.40,246.00" fill="#fafafa" stroke="#1a4ab0" stroke-width="0.4" stroke-linejoin="round"/>
<line x1="4.20" y1="249.00" x2="6.20" y2="249.00" stroke="#fbd9a8" stroke-width="0.5"/>
<line x1="8.20" y1="249.00" x2="10.20" y2="249.00" stroke="#b8f0b8" stroke-width="0.5"/>
<line x1="12.20" y1="249.00" x2="14.60" y2="249.00" stroke="#b8d0fa" stroke-width="0.5"/>
<path d="M8.6 281.4 A7.7 7.7 0 0 1 15.9 288.6" fill="none" stroke="#2a5ae0" stroke-width="1.6" stroke-linecap="round"/>
<path d="M9.2 278.2 A10.8 10.8 0 0 1 19.0 288.0" fill="none" stroke="#2a5ae0" stroke-width="1.6" stroke-linecap="round"/>
<circle cx="8.10" cy="289.20" r="4.80" fill="url(#inf)" stroke="#0e38b0" stroke-width="0.4"/>
<rect x="7.40" y="287.80" width="1.50" height="3.80" fill="#fff"/>
<circle cx="8.10" cy="286.40" r="0.90" fill="#fff"/>
<path d="M5.4 314.6 H14.4 L17.6 317.8 V330.0 H5.4 Z" fill="#fdfdfd" stroke="#2a58d0" stroke-width="0.9"/>
<path d="M14.4 314.6 V317.8 H17.6" fill="#dfe8fb" stroke="#2a58d0" stroke-width="0.6"/>
<circle cx="11.00" cy="324.00" r="3.50" fill="#2a78d8" stroke="#1a4aa0" stroke-width="0.4"/>
<path d="M9.0 322.0 C10.4 321.0 12.0 322.0 11.6 323.6 C11.0 325.4 9.0 325.6 8.4 324.4 Z" fill="#3cc04a"/>
<path d="M12.4 324.6 C13.4 324.4 14.0 325.6 13.0 326.6 C12.2 326.8 11.8 325.6 12.4 324.6 Z" fill="#3cc04a"/>
<circle cx="11.60" cy="357.40" r="6.80" fill="#c9c9d0"/>
<circle cx="11.40" cy="357.00" r="6.60" fill="#f4f6fa" stroke="#6a6a74" stroke-width="1.0"/>
<circle cx="11.40" cy="357.00" r="5.20" fill="#fdfdff" stroke="#b4bcd0" stroke-width="0.5"/>
<line x1="11.40" y1="357.00" x2="11.40" y2="352.80" stroke="#111" stroke-width="0.9"/>
<line x1="11.40" y1="357.00" x2="14.40" y2="357.60" stroke="#111" stroke-width="0.9"/>
<circle cx="11.40" cy="357.00" r="0.70" fill="#111"/>
<rect x="4.40" y="379.00" width="5.60" height="14.90" fill="url(#rnb)"/>
<line x1="12.00" y1="384.40" x2="16.60" y2="392.00" stroke="#111" stroke-width="1.9" stroke-linecap="round"/>
<polygon points="9.40,380.00 11.40,381.00 12.80,379.40 12.80,381.80 14.60,383.00 12.40,383.60 11.60,385.60 10.80,383.40 8.80,383.00 10.20,381.80" fill="#fdfdfd"/>
<rect x="5.60" y="408.60" width="3.20" height="11.20" fill="#2a6ee0" stroke="#1a4ab0" stroke-width="0.4"/>
<line x1="5.40" y1="410.40" x2="8.60" y2="410.40" stroke="#9ac0fa" stroke-width="0.5"/>
<line x1="5.40" y1="413.40" x2="8.60" y2="413.40" stroke="#9ac0fa" stroke-width="0.5"/>
<line x1="5.40" y1="416.40" x2="8.60" y2="416.40" stroke="#9ac0fa" stroke-width="0.5"/>
<line x1="9.00" y1="410.60" x2="18.60" y2="410.60" stroke="#3a70e0" stroke-width="0.9"/>
<line x1="9.00" y1="414.00" x2="17.00" y2="414.00" stroke="#3a70e0" stroke-width="0.9"/>
<line x1="4.20" y1="420.80" x2="10.00" y2="420.80" stroke="#e0a020" stroke-width="0.9"/>
<line x1="12.00" y1="413.60" x2="16.60" y2="420.20" stroke="#111" stroke-width="1.9" stroke-linecap="round"/>
<polygon points="9.40,408.40 11.40,409.60 12.80,408.00 12.80,410.40 14.60,411.60 12.40,412.20 11.60,414.20 10.80,412.00 8.80,411.60 10.20,410.40" fill="#fdfdfd"/>
<path d="M6.6 444.6 L9.6 438.0 L14.6 436.0 L16.8 438.4" fill="none" stroke="#3c3c44" stroke-width="1.5"/>
<path d="M12.6 436.6 L16.6 435.6 M14.0 437.8 L15.4 440.8" fill="none" stroke="#3c3c44" stroke-width="1.0"/>
<ellipse cx="10.00" cy="445.00" rx="5.00" ry="2.80" fill="#5a5a66" stroke="#2a2a30" stroke-width="0.5"/>
<ellipse cx="9.40" cy="443.40" rx="3.20" ry="2.40" fill="#e8ecf8" stroke="#4a58a0" stroke-width="0.5"/>
<circle cx="6.80" cy="447.60" r="1.60" fill="#f08a1c" stroke="#a05a0c" stroke-width="0.4"/>
<circle cx="13.60" cy="448.20" r="1.60" fill="#3c3c44"/>
<rect x="6.00" y="440.60" width="2.40" height="3.00" fill="#3a58c8"/>
<polygon points="5.20,465.60 8.20,463.80 8.20,476.00 5.20,477.80" fill="#e8e8e8" stroke="#222" stroke-width="0.8" stroke-linejoin="round"/>
<rect x="8.20" y="463.80" width="10.60" height="12.40" fill="#fdfdfd" stroke="#222" stroke-width="0.9"/>
<rect x="10.60" y="465.60" width="6.40" height="6.60" fill="#e83a2c"/>
<rect x="11.80" y="466.80" width="4.00" height="3.40" fill="#4a70e0"/>
<rect x="11.00" y="470.20" width="5.60" height="1.60" fill="#f6c8a0"/>
<rect x="10.60" y="473.20" width="6.40" height="1.40" fill="#d8d8d8"/>
<rect x="32.60" y="132.40" width="6.00" height="6.20" fill="#fff" stroke="#333" stroke-width="0.9"/>
<rect x="32.60" y="139.80" width="4.20" height="6.60" fill="#fff" stroke="#333" stroke-width="0.9"/>
<rect x="37.60" y="139.80" width="9.20" height="6.60" fill="#fff" stroke="#333" stroke-width="0.9"/>
<polygon points="44.40,134.20 46.40,136.00 41.40,141.40 39.60,139.60" fill="#f2c63c" stroke="#a8841c" stroke-width="0.5" stroke-linejoin="round"/>
<polygon points="44.40,134.20 45.60,133.00 47.40,134.80 46.40,136.00" fill="#e84838"/>
<polygon points="39.60,139.60 41.40,141.40 38.80,142.20" fill="#333"/>
<polygon points="30.00,152.90 42.70,155.60 42.70,167.20 30.00,164.70" fill="url(#pln)" stroke="#444" stroke-width="0.8" stroke-linejoin="round"/>
<polygon points="48.35,159.50 51.45,159.50 49.90,161.30" fill="#1a1a1a"/>
<line x1="27.20" y1="172.40" x2="52.60" y2="172.40" stroke="#d4d4d4" stroke-width="0.9"/>
<polygon points="32.00,181.00 38.60,178.40 46.00,180.40 46.00,190.00 39.40,191.80 32.00,189.60" fill="url(#ext)" stroke="#e0642c" stroke-width="0.6" stroke-linejoin="round"/>
<polygon points="32.00,181.00 38.60,178.40 46.00,180.40 39.40,182.60" fill="#fbc060" stroke="#e0642c" stroke-width="0.5" stroke-linejoin="round"/>
<polygon points="32.40,188.40 39.40,190.40 45.60,188.80 45.60,190.00 39.40,191.80 32.40,189.80" fill="#4a78e0"/>
<line x1="46.00" y1="184.60" x2="47.00" y2="184.60" stroke="#e03434" stroke-width="1.0"/>
<polygon points="46.60,183.20 48.20,184.60 46.60,186.00" fill="#e03434"/>
<path d="M32.2 206.0 C33.6 201.6 37.6 198.6 41.4 198.2 L44.0 200.8 C40.4 201.6 37.0 204.6 36.0 209.6 Z" fill="#f0f6f8" stroke="#e03434" stroke-width="0.7"/>
<path d="M36.0 209.6 C37.0 204.6 40.4 201.6 44.0 200.8" fill="none" stroke="#38c0c8" stroke-width="0.8"/>
<path d="M33.0 212.8 C37.0 209.6 40.6 205.6 47.6 204.2 L47.0 206.6 C41.4 207.6 38.6 211.0 36.2 213.0 Z" fill="#a8c4f4" stroke="#3a68d8" stroke-width="0.7"/>
<path d="M32.6 221.2 C32.6 219.6 39.3 219.4 39.3 219.4 V233.6 C37.0 233.4 36.2 232.6 36.2 231.0 V227.6 C33.6 227.2 32.6 225.6 32.6 224.0 Z" fill="#3f6cdc" stroke="#2848a8" stroke-width="0.5"/>
<path d="M46.0 221.2 C46.0 219.6 39.3 219.4 39.3 219.4 V233.6 C41.6 233.4 42.4 232.6 42.4 231.0 V227.6 C45.0 227.2 46.0 225.6 46.0 224.0 Z" fill="#f2a030" stroke="#c06a18" stroke-width="0.5"/>
<path d="M33.4 222.6 C34.6 224.0 37.6 224.4 39.3 224.4" fill="none" stroke="#8fb0f4" stroke-width="0.7"/>
<ellipse cx="39.30" cy="221.00" rx="6.60" ry="1.70" fill="none" stroke="#e03434" stroke-width="0.7"/>
<line x1="39.30" y1="218.60" x2="39.30" y2="234.00" stroke="#222" stroke-width="0.8" stroke-dasharray="1.6 1"/>
<polygon points="32.00,244.00 39.80,240.00 47.80,244.00 47.80,250.00 39.80,254.20 32.00,250.00" fill="#e6eafc" stroke="#4a68d8" stroke-width="0.9" stroke-linejoin="round"/>
<polygon points="34.60,244.60 39.80,247.20 45.20,244.60 45.20,248.40 39.80,251.20 34.60,248.40" fill="#f08a30" stroke="#e0642c" stroke-width="0.4" stroke-linejoin="round"/>
<polygon points="34.60,244.60 39.80,242.20 45.20,244.60 39.80,247.20" fill="#fbd868"/>
<line x1="27.20" y1="259.40" x2="52.60" y2="259.40" stroke="#d4d4d4" stroke-width="0.9"/>
<path d="M36.6 266.6 L45.0 265.0 C48.4 265.4 48.8 273.6 45.4 275.6 L37.4 277.8 Z" fill="url(#tub)" stroke="#8a98e4" stroke-width="0.5"/>
<ellipse cx="36.60" cy="272.20" rx="4.60" ry="5.60" fill="#c9d2f8" stroke="#7f90e0" stroke-width="0.6" transform="rotate(-10.0 36.60 272.20)"/>
<ellipse cx="36.80" cy="272.40" rx="2.30" ry="3.00" fill="#5a5a8a" stroke="#4a4a7a" stroke-width="0.4" transform="rotate(-10.0 36.80 272.40)"/>
<polygon points="33.20,286.80 41.60,284.80 46.80,286.60 38.60,288.80" fill="#fbe070" stroke="#f08a30" stroke-width="0.7" stroke-linejoin="round"/>
<line x1="40.00" y1="293.40" x2="40.00" y2="290.60" stroke="#f0642c" stroke-width="1.6"/>
<polygon points="38.00,291.20 40.00,288.80 42.00,291.20" fill="#f0642c"/>
<polygon points="32.60,294.80 40.60,293.00 46.80,294.60 46.80,297.60 38.80,299.40 32.60,297.60" fill="#9ab0f4" stroke="#4a68d8" stroke-width="0.6" stroke-linejoin="round"/>
<polygon points="32.60,294.80 40.60,293.00 46.80,294.60 38.80,296.40" fill="#dfe6fc" stroke="#4a68d8" stroke-width="0.4" stroke-linejoin="round"/>
<polygon points="31.80,313.60 40.00,310.00 46.80,313.00 46.80,315.40 38.80,319.20 31.80,316.00" fill="#7f9cec" stroke="#4a68d8" stroke-width="0.5" stroke-linejoin="round"/>
<polygon points="31.80,313.60 40.00,310.00 46.80,313.00 38.80,316.80" fill="#c9d6fa"/>
<rect x="34.10" y="308.80" width="2.20" height="3.20" fill="#f08a30"/>
<ellipse cx="35.20" cy="308.80" rx="1.10" ry="0.60" fill="#fbc860"/>
<rect x="37.70" y="307.00" width="2.20" height="3.20" fill="#f08a30"/>
<ellipse cx="38.80" cy="307.00" rx="1.10" ry="0.60" fill="#fbc860"/>
<rect x="41.30" y="308.60" width="2.20" height="3.20" fill="#f08a30"/>
<ellipse cx="42.40" cy="308.60" rx="1.10" ry="0.60" fill="#fbc860"/>
<rect x="35.50" y="311.00" width="2.20" height="3.20" fill="#f08a30"/>
<ellipse cx="36.60" cy="311.00" rx="1.10" ry="0.60" fill="#fbc860"/>
<rect x="39.30" y="311.00" width="2.20" height="3.20" fill="#f08a30"/>
<ellipse cx="40.40" cy="311.00" rx="1.10" ry="0.60" fill="#fbc860"/>
<polygon points="33.00,329.00 34.80,328.00 36.80,329.00 36.80,331.40 34.90,332.40 33.00,331.40" fill="#f08a30" stroke="#e0642c" stroke-width="0.3" stroke-linejoin="round"/>
<polygon points="33.00,329.00 34.80,328.00 36.80,329.00 34.90,330.00" fill="#fbd868"/>
<polygon points="37.80,330.60 39.60,329.60 41.60,330.60 41.60,333.00 39.70,334.00 37.80,333.00" fill="#f08a30" stroke="#e0642c" stroke-width="0.3" stroke-linejoin="round"/>
<polygon points="37.80,330.60 39.60,329.60 41.60,330.60 39.70,331.60" fill="#fbd868"/>
<polygon points="42.80,331.20 44.60,330.20 46.60,331.20 46.60,333.60 44.70,334.60 42.80,333.60" fill="#f08a30" stroke="#e0642c" stroke-width="0.3" stroke-linejoin="round"/>
<polygon points="42.80,331.20 44.60,330.20 46.60,331.20 44.70,332.20" fill="#fbd868"/>
<polygon points="32.60,334.60 34.40,333.60 36.40,334.60 36.40,337.00 34.50,338.00 32.60,337.00" fill="#f08a30" stroke="#e0642c" stroke-width="0.3" stroke-linejoin="round"/>
<polygon points="32.60,334.60 34.40,333.60 36.40,334.60 34.50,335.60" fill="#fbd868"/>
<polygon points="37.60,336.40 39.40,335.40 41.40,336.40 41.40,338.80 39.50,339.80 37.60,338.80" fill="#f08a30" stroke="#e0642c" stroke-width="0.3" stroke-linejoin="round"/>
<polygon points="37.60,336.40 39.40,335.40 41.40,336.40 39.50,337.40" fill="#fbd868"/>
<polygon points="43.20,337.00 45.00,336.00 47.00,337.00 47.00,339.40 45.10,340.40 43.20,339.40" fill="#f08a30" stroke="#e0642c" stroke-width="0.3" stroke-linejoin="round"/>
<polygon points="43.20,337.00 45.00,336.00 47.00,337.00 45.10,338.00" fill="#fbd868"/>
<path d="M32.6 356.0 C32.6 352.4 36.6 351.6 38.6 352.4 V358.0 C36.6 358.8 33.2 358.4 32.6 356.0 Z" fill="#fbd060" stroke="#e0902c" stroke-width="0.5"/>
<polygon points="37.00,349.60 43.40,347.40 43.40,359.40 37.00,361.60" fill="#f5a048" stroke="#e0642c" stroke-width="0.5" stroke-linejoin="round" opacity="0.9"/>
<polygon points="39.00,355.00 44.60,353.20 47.60,354.60 47.60,358.60 42.00,360.40 39.00,358.80" fill="#5f86e4" stroke="#3a58c8" stroke-width="0.4" stroke-linejoin="round"/>
<polygon points="39.00,355.00 44.60,353.20 47.60,354.60 42.00,356.40" fill="#e6ecfc"/>
<path d="M32.6 370.6 C34.0 369.0 37.6 369.0 38.8 370.6 V380.0 C37.6 378.6 34.0 378.6 32.6 380.2 Z" fill="url(#pnl)" stroke="#4a68d8" stroke-width="0.5"/>
<path d="M40.4 370.6 C41.8 369.0 45.4 369.0 46.8 370.6 V380.2 C45.4 378.6 41.8 378.6 40.4 380.0 Z" fill="url(#pnl)" stroke="#4a68d8" stroke-width="0.5"/>
<line x1="39.60" y1="370.00" x2="39.60" y2="380.40" stroke="#e03434" stroke-width="1.0"/>
<polygon points="32.20,395.60 40.60,391.20 47.00,394.40 47.00,397.60 38.80,401.40 32.20,398.40" fill="#7f9cec" stroke="#4a68d8" stroke-width="0.5" stroke-linejoin="round"/>
<polygon points="32.20,395.60 40.60,391.20 47.00,394.40 38.80,398.20" fill="#c9d6fa" stroke="#4a68d8" stroke-width="0.4" stroke-linejoin="round"/>
<line x1="34.40" y1="397.60" x2="45.00" y2="392.00" stroke="#e03434" stroke-width="0.9"/>
<polygon points="33.20,414.20 38.00,413.00 38.00,410.40 43.00,410.20 46.80,411.80 46.80,421.00 41.60,423.00 33.20,420.40" fill="#4f80dc" stroke="#3058b8" stroke-width="0.5" stroke-linejoin="round"/>
<polygon points="38.00,410.40 43.00,410.20 46.80,411.80 41.60,412.60" fill="#dfe8fc"/>
<polygon points="33.20,414.20 38.00,413.00 41.60,414.20 41.60,423.00 33.20,420.40" fill="#7fa4ec"/>
<polygon points="34.40,415.60 40.40,417.00 40.40,421.40 34.40,419.60" fill="#f5a850" stroke="#e0642c" stroke-width="0.4" stroke-linejoin="round"/>
<polygon points="36.40,417.60 40.40,418.60 40.40,421.40 36.40,420.20" fill="#fdfdfd"/>
<path d="M32.2 434.0 C35.6 432.0 40.0 431.4 43.6 432.0 V438.0 C40.0 437.4 36.0 438.0 33.4 439.4 Z" fill="url(#sh15)" stroke="#4a68d8" stroke-width="0.4"/>
<line x1="45.80" y1="431.60" x2="45.80" y2="442.60" stroke="#e03434" stroke-width="0.9" stroke-dasharray="1.6 0.9"/>
<polygon points="44.60,432.60 45.80,430.40 47.00,432.60" fill="#f0642c"/>
<polygon points="44.60,441.60 45.80,443.80 47.00,441.60" fill="#f0642c"/>
<path d="M32.2 452.4 C34.4 452.8 37.0 452.0 38.8 451.0 V457.0 C37.0 458.0 34.4 458.4 32.2 458.0 Z" fill="#7fa4ec" stroke="#4a68d8" stroke-width="0.4"/>
<path d="M38.2 456.6 C41.0 457.2 44.6 456.4 47.0 454.6 V463.0 C44.6 464.6 41.0 465.2 38.2 464.6 Z" fill="url(#sh16)" stroke="#e0844c" stroke-width="0.5"/>
<path d="M33.0 459.6 L35.6 462.0" fill="none" stroke="#f0642c" stroke-width="1.4"/>
<polygon points="34.00,462.80 36.80,463.00 36.40,460.40" fill="#f0642c"/>
<path d="M32.4 482 V476.0 C34.6 472.6 42.6 471.8 46.8 473.0" fill="none" stroke="#e03434" stroke-width="0.8" stroke-dasharray="1.8 1"/>
<polygon points="34.40,478.00 39.60,475.00 46.60,476.60 46.60,482.00 34.40,482.00" fill="#6f94ec" stroke="#4a68d8" stroke-width="0.5" stroke-linejoin="round"/>
<polygon points="34.40,478.00 39.60,475.00 46.60,476.60 41.40,479.40" fill="#dfe8fc"/>
<line x1="40.00" y1="475.00" x2="40.60" y2="482.00" stroke="#e03434" stroke-width="0.8" stroke-dasharray="1.6 0.9"/>
<polygon points="63.60,136.10 75.40,133.00 77.30,141.70 65.50,144.20" fill="#dceef6" stroke="#5a6ae0" stroke-width="0.8" stroke-linejoin="round"/>
<circle cx="63.60" cy="136.10" r="1.20" fill="#e03434"/>
<circle cx="75.40" cy="133.00" r="1.20" fill="#e03434"/>
<circle cx="77.30" cy="141.70" r="1.20" fill="#e03434"/>
<circle cx="65.50" cy="144.20" r="1.20" fill="#e03434"/>
<path d="M63.6 156.1 C68.0 155.3 73.0 155.1 77.9 155.1 L74.8 166.7 C71.0 165.7 67.0 164.1 63.6 162.7 Z" fill="url(#rul)" stroke="#5a6ae0" stroke-width="0.6"/>
<path d="M63.6 176.5 C68.0 175.7 73.0 175.5 77.9 175.5 L74.8 187.1 C71.0 186.1 67.0 184.5 63.6 183.1 Z" fill="url(#rul)" stroke="#5a6ae0" stroke-width="0.6"/>
<line x1="67.60" y1="176.25" x2="66.74" y2="184.22" stroke="#eef2fe" stroke-width="1.4"/>
<line x1="71.04" y1="176.03" x2="69.42" y2="185.18" stroke="#eef2fe" stroke-width="1.4"/>
<line x1="74.47" y1="175.82" x2="72.11" y2="186.14" stroke="#eef2fe" stroke-width="1.4"/>
<path d="M63.6 197.0 C68.0 196.2 73.0 196.0 77.9 196.0 L74.8 207.6 C71.0 206.6 67.0 205.0 63.6 203.6 Z" fill="url(#rul)" stroke="#5a6ae0" stroke-width="0.6"/>
<line x1="67.60" y1="196.75" x2="66.74" y2="204.72" stroke="#4a5ad8" stroke-width="0.7"/>
<line x1="71.04" y1="196.53" x2="69.42" y2="205.68" stroke="#4a5ad8" stroke-width="0.7"/>
<line x1="74.47" y1="196.32" x2="72.11" y2="206.64" stroke="#4a5ad8" stroke-width="0.7"/>
<path d="M63.6 199.4 C67.4 199.6 72.0 200.2 76.6 200.8" fill="none" stroke="#4a5ad8" stroke-width="0.6"/>
<path d="M63.6 201.6 C67.4 202.2 71.6 203.4 75.6 204.4" fill="none" stroke="#4a5ad8" stroke-width="0.6"/>
<polygon points="63.80,220.00 68.60,216.00 77.80,218.60 75.60,227.00 70.60,228.40 64.40,226.40" fill="#e6e4fc" stroke="#7a6ae8" stroke-width="0.8" stroke-linejoin="round"/>
<line x1="68.60" y1="216.00" x2="69.60" y2="223.40" stroke="#7a6ae8" stroke-width="0.6"/>
<line x1="69.60" y1="223.40" x2="64.40" y2="226.40" stroke="#7a6ae8" stroke-width="0.6"/>
<line x1="69.60" y1="223.40" x2="75.60" y2="227.00" stroke="#7a6ae8" stroke-width="0.6"/>
<path d="M66.8 226.0 V221.6 C66.8 218.4 72.6 218.4 72.6 221.6 V226.6" fill="none" stroke="#5a5a5a" stroke-width="1.6"/>
<path d="M66.8 226.0 V221.6 C66.8 218.4 72.6 218.4 72.6 221.6 V226.6" fill="none" stroke="#c4c4c4" stroke-width="0.7"/>
<path d="M63.4 243.4 C66.0 239.4 70.0 236.6 75.4 236.0 C77.0 239.6 77.0 243.6 75.0 246.6 C70.6 246.8 67.4 248.6 66.6 250.2 C65.0 248.6 63.6 246.0 63.4 243.4 Z" fill="#ececec" stroke="#f0562e" stroke-width="0.9"/>
<path d="M64.2 245.1 C66.9 241.5 70.5 239.1 75.3 238.7" fill="none" stroke="#9a9a9a" stroke-width="0.4"/>
<path d="M66.4 242.8 L68.7 249.3" fill="none" stroke="#9a9a9a" stroke-width="0.4"/>
<path d="M65.0 246.8 C67.4 243.0 71.0 240.6 75.2 241.3" fill="none" stroke="#9a9a9a" stroke-width="0.4"/>
<path d="M69.4 240.9 L70.8 248.4" fill="none" stroke="#9a9a9a" stroke-width="0.4"/>
<path d="M65.8 248.5 C67.9 244.5 71.5 242.1 75.1 243.9" fill="none" stroke="#9a9a9a" stroke-width="0.4"/>
<path d="M72.4 239.0 L72.9 247.5" fill="none" stroke="#9a9a9a" stroke-width="0.4"/>
<polygon points="66.60,236.60 69.40,235.40 68.80,238.00" fill="#f08a30"/>
<polygon points="74.60,249.40 77.60,248.40 76.40,246.20" fill="#f08a30"/>
<circle cx="69.50" cy="259.10" r="3.30" fill="#fff" stroke="#222" stroke-width="0.8"/>
<polygon points="70.40,256.60 72.40,257.80 70.60,259.00" fill="#2fb84a"/>
<circle cx="69.40" cy="259.60" r="0.80" fill="#e03434"/>
<g transform="rotate(-28 75 264.8)">
<rect x="71.40" y="262.80" width="7.40" height="3.80" fill="#3a58e0"/>
<rect x="72.60" y="262.80" width="1.20" height="3.80" fill="#e03434"/>
<rect x="74.80" y="262.80" width="1.20" height="3.80" fill="#f2d43c"/>
<rect x="77.00" y="262.80" width="1.20" height="3.80" fill="#e03434"/>
</g>
<path d="M63.6 264.6 C65.6 263.0 69.6 264.6 70.6 270.0" fill="none" stroke="#222" stroke-width="0.9"/>
<polygon points="63.00,265.60 65.20,263.40 65.60,266.20" fill="#e03434"/>
<polygon points="64.40,270.60 67.40,268.60 67.40,271.40" fill="#2fb84a"/>
<polygon points="69.40,269.40 71.80,269.20 70.60,271.60" fill="#e03434"/>
<path d="M63.4 286.0 C64.6 281.6 68.6 278.4 72.6 278.0 L75.4 280.6 C71.6 281.4 68.0 284.4 67.0 289.6 Z" fill="#f0f6f8" stroke="#e03434" stroke-width="0.7"/>
<path d="M67.0 289.6 C68.0 284.4 71.6 281.4 75.4 280.6" fill="none" stroke="#38c0c8" stroke-width="0.8"/>
<path d="M64.2 291.6 C68.0 288.6 71.8 285.4 78.4 284.0 L77.8 286.6 C72.4 287.6 69.6 290.0 67.4 292.0 Z" fill="#a8c4f4" stroke="#3a68d8" stroke-width="0.7"/>
<path d="M69.6 279.6 C70.6 283.0 72.6 285.6 75.0 287.0" fill="none" stroke="#38c0c8" stroke-width="0.7"/>
<path d="M63.0 301.6 C66.6 300.0 71.0 299.6 74.8 300.2 V306.4 C71.0 305.8 67.0 306.4 64.2 307.8 Z" fill="url(#sh9)" stroke="#4a68d8" stroke-width="0.4"/>
<line x1="76.70" y1="300.40" x2="76.70" y2="309.40" stroke="#e03434" stroke-width="0.9"/>
<polygon points="75.50,301.00 76.70,298.80 77.90,301.00" fill="#f0562e"/>
<polygon points="75.50,308.60 76.70,310.80 77.90,308.60" fill="#f0562e"/>
<path d="M59.4 321.6 C62.6 320.6 65.0 321.6 67.6 319.6 C69.6 318.4 71.6 318.6 72.6 319.6 L74.8 326.6 C73.0 328.4 70.6 327.6 68.6 328.6 C66.4 330.0 64.4 330.4 62.6 329.6 Z" fill="url(#gsh)" stroke="#6a6a72" stroke-width="0.6"/>
<path d="M62.6 329.6 C64.4 327.4 68.6 327.0 74.8 326.6" fill="none" stroke="#3a48d0" stroke-width="0.9"/>
<ellipse cx="64.60" cy="328.60" rx="1.60" ry="1.10" fill="none" stroke="#3a48d0" stroke-width="0.7"/>
<polygon points="79.25,325.10 82.35,325.10 80.80,326.90" fill="#1a1a1a"/>
<polygon points="62.80,342.40 60.60,344.00 62.80,345.60" fill="#111"/>
<path d="M78.4 341.6 L80.0 343.0 L81.6 341.6 M78.4 344.2 L80.0 345.8 L81.6 344.2" fill="none" stroke="#111" stroke-width="0.9"/>
<line x1="55.50" y1="349.50" x2="85.40" y2="349.50" stroke="#d4d4d4" stroke-width="0.9"/>
<rect x="57.6" y="352.2" width="1.1" height="1.5" fill="#a4a4a4"/><rect x="58.6" y="353.4" width="0.9" height="0.9" fill="#d4d4d4"/>
<rect x="60.3" y="352.2" width="1.1" height="1.5" fill="#a4a4a4"/><rect x="61.3" y="353.4" width="0.9" height="0.9" fill="#d4d4d4"/>
<rect x="63.0" y="352.2" width="1.1" height="1.5" fill="#a4a4a4"/><rect x="64.0" y="353.4" width="0.9" height="0.9" fill="#d4d4d4"/>
<rect x="65.8" y="352.2" width="1.1" height="1.5" fill="#a4a4a4"/><rect x="66.8" y="353.4" width="0.9" height="0.9" fill="#d4d4d4"/>
<rect x="68.5" y="352.2" width="1.1" height="1.5" fill="#a4a4a4"/><rect x="69.5" y="353.4" width="0.9" height="0.9" fill="#d4d4d4"/>
<rect x="71.2" y="352.2" width="1.1" height="1.5" fill="#a4a4a4"/><rect x="72.2" y="353.4" width="0.9" height="0.9" fill="#d4d4d4"/>
<rect x="73.9" y="352.2" width="1.1" height="1.5" fill="#a4a4a4"/><rect x="74.9" y="353.4" width="0.9" height="0.9" fill="#d4d4d4"/>
<rect x="76.6" y="352.2" width="1.1" height="1.5" fill="#a4a4a4"/><rect x="77.6" y="353.4" width="0.9" height="0.9" fill="#d4d4d4"/>
<rect x="79.4" y="352.2" width="1.1" height="1.5" fill="#a4a4a4"/><rect x="80.4" y="353.4" width="0.9" height="0.9" fill="#d4d4d4"/>
<path d="M63.2 364.4 L69.0 360.4 C72.0 361.6 74.0 360.6 77.6 362.4 L77.6 364.8 L70.6 371.4 L63.2 367.6 Z" fill="#e4e4e8" stroke="#4a5ae0" stroke-width="0.7"/>
<path d="M63.2 364.4 C66.0 363.6 68.6 366.0 70.8 368.0 L77.6 362.4" fill="none" stroke="#4a5ae0" stroke-width="0.7"/>
<path d="M64.8 361.6 C68.0 363.0 69.6 364.6 72.6 363.0 C74.0 362.2 75.0 364.0 76.6 365.4" fill="none" stroke="#e03434" stroke-width="0.9"/>
<path d="M63.2 384.6 L70.0 378.6 L77.8 381.6 C76.6 385.6 73.6 389.6 69.6 391.4 C67.0 389.6 64.6 387.6 63.2 384.6 Z" fill="#eceaf4" stroke="#e03434" stroke-width="0.9"/>
<path d="M65.8 384.6 L70.2 381.0 L75.0 382.8 C74.0 385.6 72.0 387.8 69.8 389.0 C68.2 387.8 66.8 386.4 65.8 384.6 Z" fill="#c4cef4" stroke="#6a7ae0" stroke-width="0.5"/>
<polygon points="68.60,400.60 74.60,399.00 77.80,403.60 76.60,412.00 70.60,413.60 67.60,409.00" fill="#9ab0f0" stroke="#5a78d8" stroke-width="0.5" stroke-linejoin="round"/>
<line x1="70.00" y1="398.80" x2="75.60" y2="403.40" stroke="#e03434" stroke-width="0.8"/>
<line x1="71.80" y1="399.80" x2="76.50" y2="404.30" stroke="#e03434" stroke-width="0.8"/>
<line x1="73.60" y1="400.80" x2="77.40" y2="405.20" stroke="#e03434" stroke-width="0.8"/>
<line x1="75.40" y1="401.80" x2="78.30" y2="406.10" stroke="#e03434" stroke-width="0.8"/>
<path d="M63.2 411.6 L67.6 407.0 C66.8 405.2 68.2 403.2 70.2 403.4 L69.0 405.2 L70.4 406.4 L72.2 405.2 C72.4 407.2 70.6 408.6 68.8 408.2 L65.0 413.6 C64.0 414.4 62.6 413.0 63.2 411.6 Z" fill="#f2c63c" stroke="#a88414" stroke-width="0.5"/>
<line x1="58.00" y1="418.30" x2="82.90" y2="418.30" stroke="#d4d4d4" stroke-width="0.9"/>
<polygon points="66.00,425.60 74.60,424.40 74.00,434.60 66.60,433.60" fill="url(#b4)" stroke="#5a78d8" stroke-width="0.5" stroke-linejoin="round"/>
<polygon points="66.60,433.60 74.00,434.60 70.60,438.60 63.40,436.60" fill="#c9d6fa" stroke="#5a78d8" stroke-width="0.5" stroke-linejoin="round"/>
<polygon points="74.00,434.60 76.60,432.00 77.20,435.60 74.20,437.60" fill="#8a8a92"/>
<line x1="66.40" y1="423.00" x2="67.60" y2="426.00" stroke="#e03434" stroke-width="1.1"/>
<line x1="69.40" y1="423.20" x2="70.60" y2="426.20" stroke="#e03434" stroke-width="1.1"/>
<line x1="72.40" y1="423.40" x2="73.60" y2="426.40" stroke="#e03434" stroke-width="1.1"/>
<line x1="75.40" y1="423.60" x2="76.60" y2="426.60" stroke="#e03434" stroke-width="1.1"/>
<line x1="66.00" y1="423.00" x2="77.20" y2="423.80" stroke="#e03434" stroke-width="0.7"/>
<line x1="66.40" y1="426.00" x2="77.60" y2="426.80" stroke="#e03434" stroke-width="0.7"/>
<polygon points="63.40,436.60 70.60,438.60 70.00,440.20 63.00,438.40" fill="#fbe0e0" stroke="#e03434" stroke-width="0.6" stroke-linejoin="round"/>
<line x1="65.60" y1="437.20" x2="65.20" y2="439.00" stroke="#e03434" stroke-width="0.6"/>
<line x1="68.00" y1="437.80" x2="67.60" y2="439.60" stroke="#e03434" stroke-width="0.6"/>
<line x1="58.00" y1="443.40" x2="82.90" y2="443.40" stroke="#d4d4d4" stroke-width="0.9"/>
<path d="M64.4 451.0 V460.2 C64.4 463.4 76.8 463.4 76.8 460.2 V451.0 Z" fill="url(#cyl5)" stroke="#7f90e6" stroke-width="0.5"/>
<ellipse cx="70.60" cy="451.00" rx="6.20" ry="2.40" fill="#dfe4fc" stroke="#8a98ea" stroke-width="0.6"/>
<ellipse cx="71.60" cy="463.20" rx="6.00" ry="1.20" fill="#bdbdc6" opacity="0.5"/>
<circle cx="70.50" cy="476.60" r="6.30" fill="url(#sph)"/>
<polygon points="280.20,145.25 283.60,145.25 281.90,147.15" fill="#fff"/>
<line x1="291.60" y1="142.60" x2="298.00" y2="149.40" stroke="#fff" stroke-width="1.5"/>
<line x1="298.00" y1="142.60" x2="291.60" y2="149.40" stroke="#fff" stroke-width="1.5"/>
<path d="M117.8 157.4 H122.6 L125.0 159.8 V166.2 H117.8 Z" fill="#dfe2f8" stroke="#9aa2e0" stroke-width="0.6"/>
<line x1="118.80" y1="160.20" x2="123.80" y2="160.20" stroke="#9a9ab4" stroke-width="0.5"/>
<line x1="118.80" y1="161.80" x2="123.80" y2="161.80" stroke="#9a9ab4" stroke-width="0.5"/>
<line x1="118.80" y1="163.40" x2="123.80" y2="163.40" stroke="#9a9ab4" stroke-width="0.5"/>
<line x1="128.00" y1="165.20" x2="128.00" y2="171.00" stroke="#444" stroke-width="0.6"/>
<line x1="128.00" y1="167.60" x2="130.20" y2="167.60" stroke="#444" stroke-width="0.6"/>
<line x1="128.00" y1="170.60" x2="130.20" y2="170.60" stroke="#444" stroke-width="0.6"/>
<rect x="127.00" y="164.40" width="2.20" height="2.00" fill="#5a78e0" stroke="#2a3a90" stroke-width="0.3"/>
<rect x="130.20" y="166.60" width="2.20" height="2.00" fill="#f2d43c" stroke="#907a10" stroke-width="0.3"/>
<rect x="130.20" y="169.60" width="2.20" height="2.00" fill="#5a78e0" stroke="#2a3a90" stroke-width="0.3"/>
<polygon points="138.40,166.60 145.60,163.60 146.60,160.80 152.60,162.60 152.60,167.60 145.00,171.90 138.40,169.80" fill="#f2c23c" stroke="#c8921c" stroke-width="0.5" stroke-linejoin="round"/>
<polygon points="138.40,166.60 145.60,163.60 146.60,160.80 152.60,162.60 146.00,166.40 144.80,169.00" fill="#fbe27a"/>
<polygon points="138.40,166.60 144.80,169.00 145.00,171.90 138.40,169.80" fill="#e6aa28"/>
<path d="M139.2 161.4 L141.4 164.4 L146.6 158.0" fill="none" stroke="#1fae2c" stroke-width="1.6" stroke-linecap="round" stroke-linejoin="round"/>
<rect x="160.00" y="158.20" width="13.60" height="13.00" fill="#f0f0f0" stroke="#8a8a8a" stroke-width="0.7"/>
<line x1="166.80" y1="157.40" x2="166.80" y2="172.00" stroke="#6a6a6a" stroke-width="0.7"/>
<line x1="159.20" y1="164.70" x2="174.40" y2="164.70" stroke="#6a6a6a" stroke-width="0.7"/>
<rect x="161.40" y="159.60" width="3.00" height="3.60" fill="none" stroke="#9a3ab8" stroke-width="0.9"/>
<circle cx="170.40" cy="161.40" r="1.70" fill="none" stroke="#3a58d8" stroke-width="0.9"/>
<rect x="161.60" y="166.60" width="3.00" height="3.00" fill="#a9c4f4" stroke="#3a78d0" stroke-width="0.5"/>
<path d="M169.0 170.4 L170.6 166.4 L172.2 170.4 M169.6 169.2 H171.6" fill="none" stroke="#e03434" stroke-width="0.8"/>
<circle cx="166.80" cy="164.70" r="1.00" fill="#f2d43c" stroke="#a88414" stroke-width="0.3"/>
<line x1="181.30" y1="167.30" x2="181.30" y2="159.60" stroke="#2a32e0" stroke-width="1.0"/>
<polygon points="180.00,160.20 181.30,157.60 182.60,160.20" fill="#2a32e0"/>
<line x1="181.30" y1="167.30" x2="188.60" y2="164.40" stroke="#1fae2c" stroke-width="1.0"/>
<polygon points="187.80,163.20 190.60,163.60 188.60,165.60" fill="#1fae2c"/>
<line x1="181.30" y1="167.30" x2="188.40" y2="170.00" stroke="#e03434" stroke-width="1.0"/>
<polygon points="188.20,168.60 190.40,170.80 187.40,171.00" fill="#e03434"/>
<text x="183.2" y="161.4" font-family="Liberation Sans,sans-serif" font-size="4.6" font-weight="bold" fill="#222">Z</text>
<text x="191.0" y="165.4" font-family="Liberation Sans,sans-serif" font-size="4.6" font-weight="bold" fill="#222">Y</text>
<text x="190.6" y="172.8" font-family="Liberation Sans,sans-serif" font-size="4.6" font-weight="bold" fill="#222">X</text>
<polygon points="200.80,162.40 205.40,158.40 214.60,158.40 214.60,167.60 210.00,171.80 200.80,171.80" fill="#f6f6f6" stroke="#7a7a7a" stroke-width="0.6" stroke-linejoin="round"/>
<line x1="200.80" y1="162.40" x2="210.00" y2="162.40" stroke="#7a7a7a" stroke-width="0.6"/>
<line x1="210.00" y1="162.40" x2="214.60" y2="158.40" stroke="#7a7a7a" stroke-width="0.6"/>
<line x1="210.00" y1="162.40" x2="210.00" y2="171.80" stroke="#7a7a7a" stroke-width="0.6"/>
<polygon points="200.80,166.00 203.60,163.80 208.60,163.80 208.60,169.60 206.00,171.80 200.80,171.80" fill="#f2b83c" stroke="#d88a1c" stroke-width="0.4" stroke-linejoin="round"/>
<polygon points="200.80,166.00 203.60,163.80 208.60,163.80 206.00,166.00" fill="#fbe27a"/>
<rect x="200.80" y="166.00" width="5.20" height="5.80" fill="#f6ca4c"/>
<line x1="206.40" y1="165.60" x2="210.20" y2="162.40" stroke="#e03434" stroke-width="0.9"/>
<polygon points="209.00,162.00 211.00,161.60 210.40,163.60" fill="#e03434"/>
<polygon points="221.40,162.60 228.60,158.60 235.60,162.00 235.60,166.60 228.40,171.60 221.40,167.40" fill="#f6f6f6" stroke="#5a5a5a" stroke-width="0.7" stroke-linejoin="round"/>
<polygon points="224.00,163.00 228.60,160.60 233.00,162.60 228.40,165.60" fill="#fff" stroke="#5a5a5a" stroke-width="0.6" stroke-linejoin="round"/>
<line x1="221.40" y1="162.60" x2="228.40" y2="166.80" stroke="#5a5a5a" stroke-width="0.6"/>
<line x1="228.40" y1="166.80" x2="235.60" y2="162.00" stroke="#5a5a5a" stroke-width="0.6"/>
<line x1="228.40" y1="166.80" x2="228.40" y2="171.60" stroke="#5a5a5a" stroke-width="0.6"/>
<path d="M222.0 160.8 L228.6 157.6 L235.0 160.4" fill="none" stroke="#e03434" stroke-width="0.6" stroke-dasharray="1.2 0.9"/>
<path d="M225.4 168.4 L225.0 171.8 L228.0 172.2" fill="none" stroke="#e03434" stroke-width="0.6"/>
<path d="M242.2 158.4 H248.6 V161.6 H246.0 V171.4 H242.2 Z" fill="#fbfbfb" stroke="#8a8a8a" stroke-width="0.8"/>
<path d="M250.8 158.4 H255.8 V171.4 H247.8 V163.6 H250.8 Z" fill="#fbfbfb" stroke="#8a8a8a" stroke-width="0.8"/>
<line x1="268.00" y1="161.00" x2="276.60" y2="171.00" stroke="#f0a840" stroke-width="2.2" stroke-linecap="round"/>
<polygon points="262.80,160.40 268.60,157.40 270.60,159.60 269.00,160.60 270.20,162.20 267.80,163.60 266.40,161.60 264.20,162.60" fill="#9a9aa4" stroke="#5a5a64" stroke-width="0.4" stroke-linejoin="round"/>
<line x1="276.20" y1="158.20" x2="271.60" y2="164.00" stroke="#b4b4bc" stroke-width="1.3" stroke-linecap="round"/>
<line x1="271.00" y1="164.60" x2="264.60" y2="170.80" stroke="#4a5ae0" stroke-width="2.6" stroke-linecap="round"/>
<line x1="270.40" y1="164.40" x2="265.00" y2="169.60" stroke="#8a98f0" stroke-width="0.8"/>
<polygon points="283.40,167.20 290.00,164.80 297.00,167.00 297.00,169.40 290.20,171.80 283.40,169.60" fill="#f2c23c" stroke="#b88a1c" stroke-width="0.5" stroke-linejoin="round"/>
<polygon points="283.40,167.20 290.00,164.80 297.00,167.00 290.20,169.40" fill="#fbe27a" stroke="#b88a1c" stroke-width="0.4" stroke-linejoin="round"/>
<polygon points="287.40,163.80 293.00,163.80 292.40,166.60 288.00,166.60" fill="#e6aa28" stroke="#b88a1c" stroke-width="0.4" stroke-linejoin="round"/>
<polygon points="283.40,160.60 290.00,158.20 297.00,160.40 297.00,162.80 290.20,165.20 283.40,163.00" fill="#f2c23c" stroke="#b88a1c" stroke-width="0.5" stroke-linejoin="round"/>
<polygon points="283.40,160.60 290.00,158.20 297.00,160.40 290.20,162.80" fill="#fbe27a" stroke="#b88a1c" stroke-width="0.4" stroke-linejoin="round"/>
<line x1="287.00" y1="159.60" x2="293.20" y2="161.80" stroke="#e03434" stroke-width="0.8"/>
<line x1="293.00" y1="159.60" x2="287.20" y2="161.80" stroke="#e03434" stroke-width="0.8"/>
<rect x="117.80" y="177.40" width="15.20" height="15.20" fill="#f2f2f2" stroke="#8a8a8a" stroke-width="0.7"/>
<line x1="117.80" y1="179.40" x2="133.00" y2="179.40" stroke="#9a9a9a" stroke-width="0.6"/>
<line x1="117.80" y1="181.40" x2="133.00" y2="181.40" stroke="#9a9a9a" stroke-width="0.6"/>
<line x1="117.80" y1="183.40" x2="133.00" y2="183.40" stroke="#9a9a9a" stroke-width="0.6"/>
<line x1="117.80" y1="190.40" x2="133.00" y2="190.40" stroke="#9a9a9a" stroke-width="0.6"/>
<rect x="120.60" y="185.00" width="9.80" height="4.40" fill="#c9d2fa" stroke="#5a6ae0" stroke-width="0.6"/>
<rect x="122.20" y="186.20" width="6.60" height="2.00" fill="#eef0fe" stroke="#8a98e8" stroke-width="0.4"/>
<rect x="139.60" y="178.40" width="4.00" height="10.80" fill="url(#blt139)" stroke="#2a4ab0" stroke-width="0.4"/>
<ellipse cx="141.60" cy="178.40" rx="2.00" ry="0.90" fill="#c4d6fc" stroke="#2a4ab0" stroke-width="0.4"/>
<path d="M138.2 189.0 H145.0 L145.6 191.8 H137.6 Z" fill="#5a84e8" stroke="#2a4ab0" stroke-width="0.4"/>
<path d="M146.6 179.2 H152.0 C153.6 179.2 153.8 180.2 153.8 181.2 V189.6 C153.8 190.8 153.4 191.6 152.0 191.6 H146.6 V188.0 H149.4 V182.8 H146.6 Z" fill="#f6cf5c" stroke="#b88a1c" stroke-width="0.6"/>
<circle cx="151.40" cy="181.00" r="0.60" fill="#7a5a10"/>
<circle cx="151.40" cy="189.80" r="0.60" fill="#7a5a10"/>
<rect x="159.80" y="178.40" width="4.00" height="10.80" fill="url(#blt159)" stroke="#2a4ab0" stroke-width="0.4"/>
<ellipse cx="161.80" cy="178.40" rx="2.00" ry="0.90" fill="#c4d6fc" stroke="#2a4ab0" stroke-width="0.4"/>
<path d="M158.4 189.0 H165.2 L165.8 191.8 H157.8 Z" fill="#5a84e8" stroke="#2a4ab0" stroke-width="0.4"/>
<polygon points="165.40,179.60 168.00,178.20 168.00,184.40 165.40,185.80" fill="#2cb84a" stroke="#1a7a2c" stroke-width="0.3" stroke-linejoin="round"/>
<polygon points="168.20,179.30 170.80,177.90 170.80,184.10 168.20,185.50" fill="#f08a30" stroke="#b05a10" stroke-width="0.3" stroke-linejoin="round"/>
<polygon points="171.00,179.00 173.60,177.60 173.60,183.80 171.00,185.20" fill="#3a68e0" stroke="#2040a8" stroke-width="0.3" stroke-linejoin="round"/>
<polygon points="173.60,177.60 174.40,177.80 174.40,183.80 173.80,184.20" fill="#8aa8f0"/>
<path d="M181.0 181.6 C180.2 180.2 181.0 179.0 182.6 179.4 M193.6 181.6 C194.4 180.2 193.6 179.0 192.0 179.4" fill="none" stroke="#e03434" stroke-width="0.7"/>
<line x1="181.40" y1="179.60" x2="193.20" y2="179.60" stroke="#e03434" stroke-width="0.9"/>
<rect x="180.00" y="184.00" width="14.60" height="2.60" fill="url(#hB)" stroke="#6a7ab8" stroke-width="0.3"/>
<rect x="182.00" y="186.60" width="10.60" height="2.40" fill="url(#hG)" stroke="#8a8a8a" stroke-width="0.3"/>
<rect x="185.40" y="180.00" width="3.60" height="11.80" fill="#4a5ad0" stroke="#2a3a90" stroke-width="0.4"/>
<line x1="186.40" y1="180.40" x2="186.40" y2="191.40" stroke="#a9b8f8" stroke-width="0.7"/>
<polygon points="201.20,184.00 206.00,179.40 208.60,181.60 210.80,181.40 210.80,189.00 201.20,189.00" fill="#2a9c98" stroke="#1a6c68" stroke-width="0.4" stroke-linejoin="round"/>
<rect x="201.40" y="189.80" width="6.60" height="1.40" fill="#f07a30"/>
<circle cx="202.60" cy="191.60" r="0.80" fill="#f07a30"/>
<circle cx="206.80" cy="191.60" r="0.80" fill="#f07a30"/>
<rect x="211.90" y="177.40" width="2.90" height="15.00" fill="url(#hB)" stroke="#3a58c8" stroke-width="0.4"/>
<line x1="211.90" y1="181.00" x2="214.80" y2="181.00" stroke="#fff" stroke-width="0.6"/>
<line x1="211.90" y1="188.60" x2="214.80" y2="188.60" stroke="#fff" stroke-width="0.6"/>
<rect x="221.40" y="181.40" width="14.40" height="8.60" fill="url(#hB)"/>
<path d="M227.4 179.6 H231.0 V187.2 H234.4 V190.2 H224.0 V187.2 H227.4 Z" fill="url(#hO)" stroke="#c8861c" stroke-width="0.5"/>
<rect x="242.20" y="178.00" width="13.60" height="13.80" fill="#111"/>
<rect x="244.60" y="178.00" width="11.20" height="2.20" fill="url(#hG)"/>
<rect x="244.60" y="189.60" width="11.20" height="2.20" fill="url(#hG)"/>
<path d="M245.6 182.6 H250.6 V181.6 H255.8 V188.4 H250.6 V187.4 H245.6 Z" fill="#f4f4f4"/>
<rect x="247.40" y="183.60" width="3.40" height="2.80" fill="#111"/>
<circle cx="248.00" cy="184.60" r="3.90" fill="none" stroke="#e03434" stroke-width="0.9"/>
<rect x="264.80" y="179.00" width="2.20" height="5.00" fill="#f6f08a" stroke="#a8a030" stroke-width="0.4"/>
<rect x="264.80" y="185.40" width="2.20" height="5.00" fill="#f6f08a" stroke="#a8a030" stroke-width="0.4"/>
<rect x="273.00" y="179.00" width="2.20" height="5.00" fill="#f6f08a" stroke="#a8a030" stroke-width="0.4"/>
<rect x="273.00" y="185.40" width="2.20" height="5.00" fill="#f6f08a" stroke="#a8a030" stroke-width="0.4"/>
<path d="M267.0 181.4 H273.0 M267.0 188.0 H273.0 M270.0 181.4 V188.0" fill="none" stroke="#7a7a7a" stroke-width="1.2"/>
<path d="M268.0 181.4 H272.0 M268.0 188.0 H272.0" fill="none" stroke="#b4b4b4" stroke-width="2.0"/>
<path d="M284.4 180.0 H294.6 V183.6 H288.0 V187.6 H296.6 V190.6 H286.0" fill="none" stroke="#3a88c8" stroke-width="1.1"/>
<rect x="283.20" y="178.20" width="2.20" height="2.60" fill="#1a2aa8"/>
<rect x="295.60" y="189.00" width="2.20" height="2.60" fill="#1a2aa8"/>
<line x1="288.60" y1="182.60" x2="295.60" y2="190.40" stroke="#f0a840" stroke-width="2.0" stroke-linecap="round"/>
<polygon points="283.60,183.60 289.00,180.40 291.00,182.60 289.40,183.60 290.40,185.00 288.20,186.40 287.00,184.80 285.00,185.80" fill="#9a9aa4" stroke="#5a5a64" stroke-width="0.4" stroke-linejoin="round"/>
<path d="M123.0 198.6 H127.8 V206.6 H130.6 V211.8 H120.2 V206.6 H123.0 Z" fill="url(#hY)" stroke="#333" stroke-width="0.7"/>
<rect x="123.00" y="198.60" width="4.80" height="3.00" fill="#fafafa" stroke="#333" stroke-width="0.6"/>
<path d="M118.6 203.0 C122.0 201.6 128.0 201.6 131.8 203.2" fill="none" stroke="#e03434" stroke-width="0.9"/>
<polygon points="138.20,203.25 141.60,203.25 139.90,205.15" fill="#1a1a1a"/>
<path d="M146.4 205.0 H151.6 V209.6 H155.6 V205.0 H160.4 V212.4 H146.4 Z" fill="url(#hG)" stroke="#9a9a9a" stroke-width="0.4"/>
<path d="M149.0 199.6 H158.6 V202.0 H156.0 V209.0 H151.6 V202.0 H149.0 Z" fill="#fdf4f4" stroke="#e03434" stroke-width="0.8"/>
<circle cx="153.80" cy="198.60" r="1.10" fill="#f08a30"/>
<line x1="153.80" y1="199.60" x2="153.80" y2="203.60" stroke="#f08a30" stroke-width="0.8"/>
<rect x="167.20" y="198.60" width="13.80" height="12.60" fill="#fdfdfd" stroke="#7a7a7a" stroke-width="0.6"/>
<line x1="167.20" y1="200.70" x2="181.00" y2="200.70" stroke="#8a8a8a" stroke-width="0.5"/>
<line x1="167.20" y1="202.80" x2="181.00" y2="202.80" stroke="#8a8a8a" stroke-width="0.5"/>
<line x1="167.20" y1="204.90" x2="181.00" y2="204.90" stroke="#8a8a8a" stroke-width="0.5"/>
<line x1="167.20" y1="207.00" x2="181.00" y2="207.00" stroke="#8a8a8a" stroke-width="0.5"/>
<line x1="167.20" y1="209.10" x2="181.00" y2="209.10" stroke="#8a8a8a" stroke-width="0.5"/>
<line x1="171.00" y1="198.60" x2="171.00" y2="211.20" stroke="#8a8a8a" stroke-width="0.5"/>
<line x1="174.60" y1="198.60" x2="174.60" y2="211.20" stroke="#8a8a8a" stroke-width="0.5"/>
<line x1="178.00" y1="198.60" x2="178.00" y2="211.20" stroke="#8a8a8a" stroke-width="0.5"/>
<rect x="167.40" y="209.20" width="13.40" height="1.90" fill="#f2dc4c"/>
<rect x="188.40" y="198.60" width="14.20" height="13.60" fill="#dfeafa" stroke="#9ab0e0" stroke-width="0.7"/>
<rect x="190.60" y="200.20" width="10.00" height="3.40" fill="#f6f6f6" stroke="#8a8a8a" stroke-width="0.6"/>
<rect x="190.60" y="204.40" width="10.00" height="3.60" fill="#e8e8e8" stroke="#8a8a8a" stroke-width="0.6"/>
<rect x="196.00" y="209.00" width="5.80" height="2.40" fill="#c9d6ec" stroke="#9ab0d0" stroke-width="0.4"/>
<path d="M208.6 204.6 C211.6 199.6 219.0 199.6 222.4 204.6 C219.0 207.6 211.6 207.8 208.6 204.6 Z" fill="#f4f4f4" stroke="#222" stroke-width="0.9"/>
<circle cx="215.40" cy="204.00" r="2.50" fill="#4a9a2c" stroke="#2a5a18" stroke-width="0.4"/>
<circle cx="215.40" cy="204.00" r="1.00" fill="#111"/>
<path d="M209.6 202.4 L208.4 200.8 M211.8 200.8 L211.0 199.0 M214.6 200.0 L214.4 198.2 M217.6 200.2 L218.2 198.6 M220.2 201.6 L221.4 200.2" fill="none" stroke="#222" stroke-width="0.7"/>
<path d="M231.4 200.6 V210.2 C231.4 212.8 241.6 212.8 241.6 210.2 V200.6 Z" fill="#e4eefc" stroke="#e03434" stroke-width="0.8"/>
<ellipse cx="236.50" cy="200.60" rx="5.10" ry="1.80" fill="#fbe88a" stroke="#e03434" stroke-width="0.8"/>
<circle cx="236.50" cy="206.80" r="2.70" fill="none" stroke="#3a78d8" stroke-width="1.2" stroke-dasharray="2.6 1.6"/>
<path d="M254.0 198.0 H261.6 L264.6 201.0 V211.8 H254.0 Z" fill="#dfe2f8" stroke="#9aa2e0" stroke-width="0.7"/>
<rect x="257.00" y="203.00" width="5.80" height="1.40" fill="#e8485a"/>
<rect x="257.00" y="205.40" width="5.80" height="1.40" fill="#e8485a"/>
<rect x="257.00" y="207.80" width="5.80" height="1.40" fill="#f0a8b4"/>
<rect x="251.60" y="199.60" width="3.20" height="10.20" fill="url(#blt251)" stroke="#2a4ab0" stroke-width="0.4"/>
<ellipse cx="253.20" cy="199.60" rx="1.60" ry="0.90" fill="#c4d6fc" stroke="#2a4ab0" stroke-width="0.4"/>
<path d="M250.2 209.6 H256.2 L256.8 212.4 H249.6 Z" fill="#5a84e8" stroke="#2a4ab0" stroke-width="0.4"/>
</svg>
</body></html>
